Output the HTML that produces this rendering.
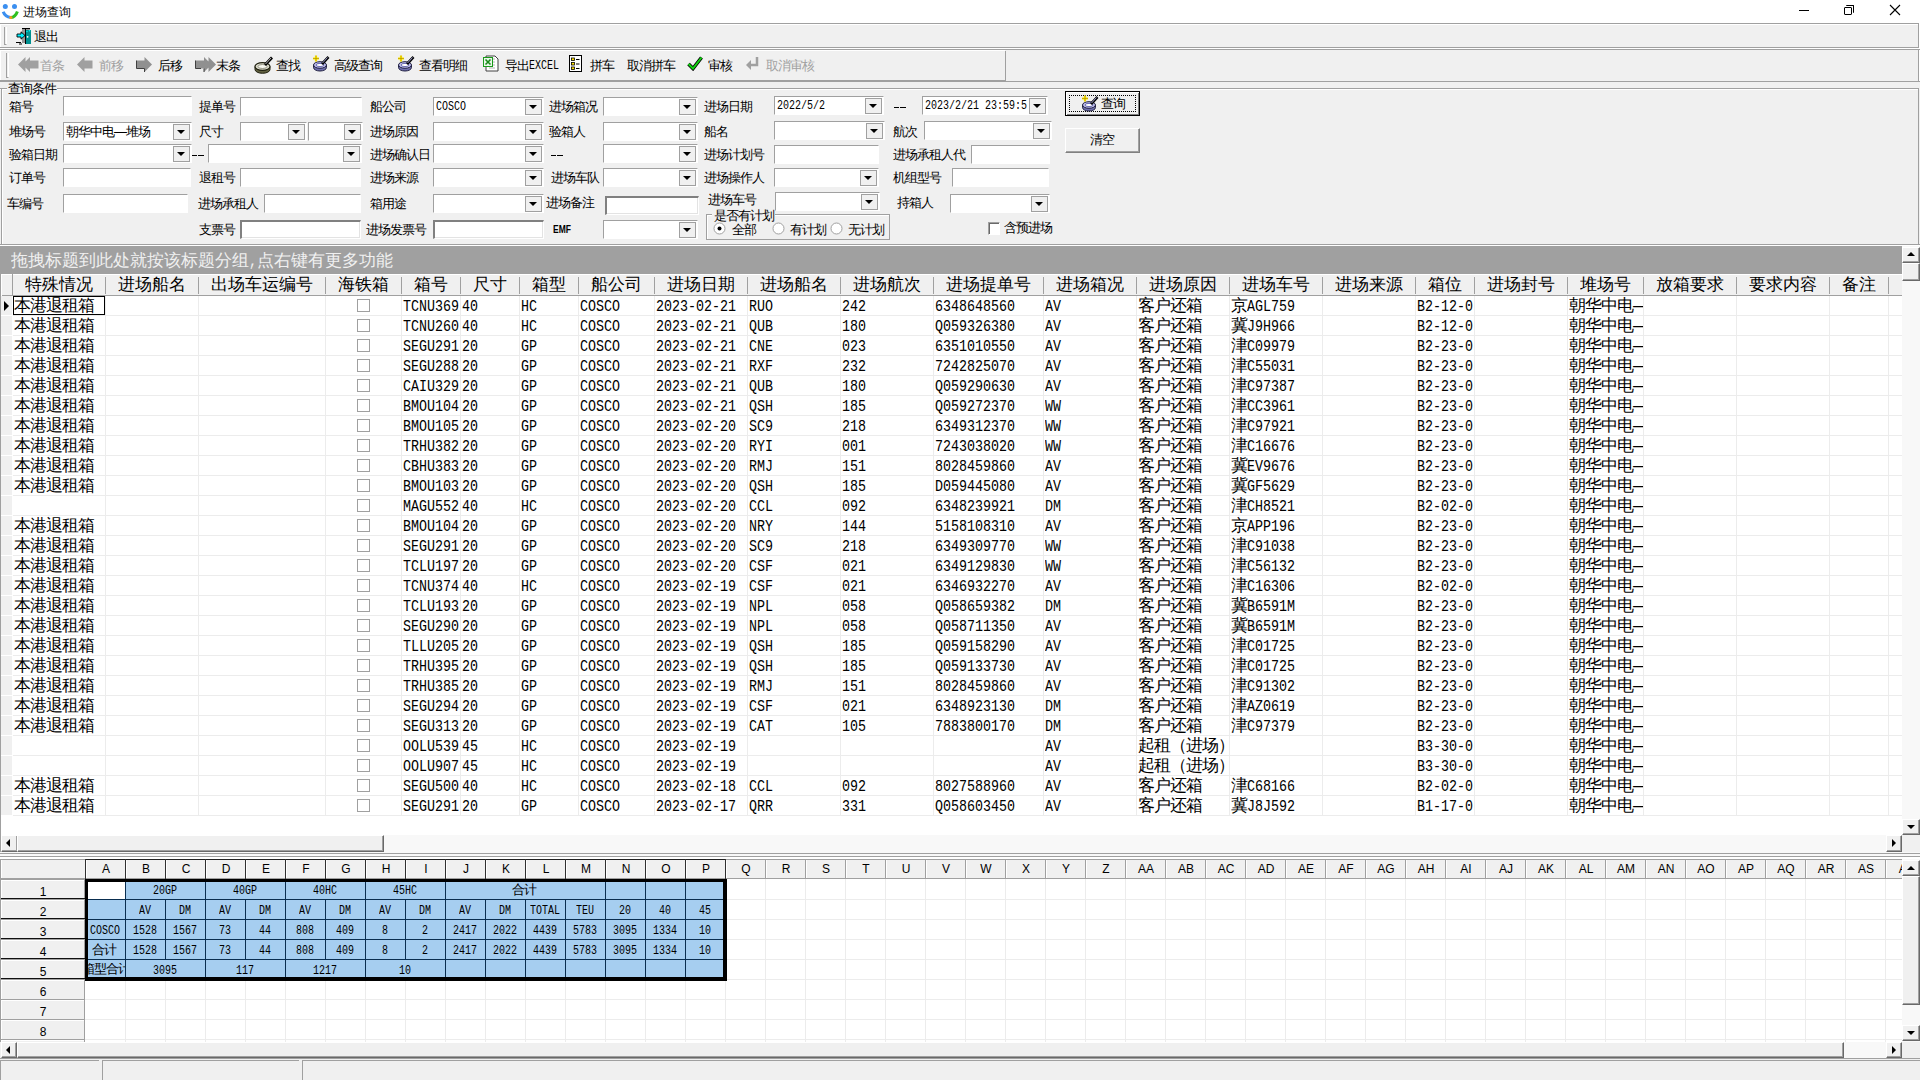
<!DOCTYPE html><html><head><meta charset="utf-8"><title>进场查询</title><style>
html,body{margin:0;padding:0;width:1920px;height:1080px;overflow:hidden;background:#f0f0f0;}
body{position:relative;font-family:"Liberation Sans",sans-serif;}
div{position:absolute;box-sizing:border-box;white-space:nowrap;}
.t12{font-size:13px;line-height:12px;letter-spacing:-1px;color:#000;}
.s12{font-size:12px;line-height:12px;color:#000;}
.c17{top:0;font-size:17px;line-height:20px;color:#000;}
.a16{top:1px;font-family:'Liberation Mono',monospace;font-size:16px;line-height:20px;transform:scaleX(0.8333);transform-origin:0 0;color:#000;}
.inp{background:#fff;border-top:1px solid #a0a0a0;border-left:1px solid #a0a0a0;border-right:1px solid #fff;border-bottom:1px solid #fff;}
.sunk{background:#fff;border-top:2px solid #808080;border-left:2px solid #808080;border-right:1px solid #fff;border-bottom:1px solid #fff;box-shadow:inset -1px -1px 0 #e3e3e3;}
.cbtn{background:#f0f0f0;border:1px solid #a0a0a0;}
.tri{width:0;height:0;border-left:4px solid transparent;border-right:4px solid transparent;border-top:4px solid #000;}
.hl{background:#a0a0a0;}
</style></head><body>
<div class="" style="left:0px;top:0px;width:1920px;height:23px;background:#fff;"></div>
<svg style="position:absolute;left:1px;top:3px" width="18" height="17" viewBox="0 0 18 17"><circle cx="4.3" cy="3.4" r="2.5" fill="#3b8ff0"/><circle cx="13.5" cy="3.4" r="2.5" fill="#3b8ff0"/><path d="M2.2 8.8 Q4 13.8 9.8 14.6" stroke="#3b8ff0" stroke-width="3" fill="none"/><path d="M9.8 14.6 Q14.5 13.8 16.4 8.4" stroke="#2fc020" stroke-width="3" fill="none"/><circle cx="9.8" cy="14.5" r="1.6" fill="#f39a1c"/></svg>
<div class="t12" style="left:23px;top:6px;font-size:12px;letter-spacing:0;">进场查询</div>
<div class="" style="left:1799px;top:10px;width:10px;height:1px;background:#000;"></div>
<div class="" style="left:1844px;top:7px;width:8px;height:8px;border:1px solid #000;border-radius:1px;"></div>
<div class="" style="left:1846px;top:5px;width:8px;height:8px;border-top:1px solid #000;border-right:1px solid #000;border-radius:1px;"></div>
<svg style="position:absolute;left:1889px;top:4px" width="12" height="12" viewBox="0 0 12 12"><path d="M1 1L11 11M11 1L1 11" stroke="#000" stroke-width="1.1"/></svg>
<div class="" style="left:0px;top:23px;width:1920px;height:1px;background:#a0a0a0;"></div>
<div class="" style="left:0px;top:24px;width:1918px;height:23px;background:#f0f0f0;border-top:1px solid #fff;border-left:1px solid #fff;"></div>
<div class="" style="left:0px;top:47px;width:1919px;height:1px;background:#a0a0a0;"></div>
<div class="" style="left:1918px;top:23px;width:1px;height:25px;background:#a0a0a0;"></div>
<div class="" style="left:1919px;top:23px;width:1px;height:59px;background:#fff;"></div>
<div class="" style="left:4px;top:27px;width:3px;height:18px;border-left:1px solid #a0a0a0;border-bottom:1px solid #a0a0a0;border-right:1px solid #fff;"></div>
<svg style="position:absolute;left:16px;top:28px" width="16" height="17" viewBox="0 0 16 17"><rect x="6" y="1" width="8" height="14" fill="#989898"/><path d="M6 0.5H14" stroke="#000"/><rect x="10" y="2" width="5" height="14" fill="#009090"/><path d="M9.5 1V16" stroke="#000"/><circle cx="11.6" cy="8.8" r="0.9" fill="#fff"/><circle cx="13.5" cy="2.8" r="0.8" fill="#0ff"/><circle cx="11" cy="3.5" r="0.7" fill="#0ff"/><path d="M9 7.5L5 3.8V6H1V9H5V11.2Z" fill="#00f0ff" stroke="#000" stroke-width="0.9"/><path d="M0 14.5H5M3 16H6" stroke="#000" stroke-width="1"/></svg>
<div class="t12" style="left:34px;top:31px;">退出</div>
<div class="" style="left:0px;top:48px;width:1920px;height:1px;background:#fff;"></div>
<div class="" style="left:0px;top:49px;width:1920px;height:1px;background:#a0a0a0;"></div>
<div class="" style="left:0px;top:50px;width:1005px;height:31px;background:#f0f0f0;border-top:1px solid #fff;border-left:1px solid #fff;"></div>
<div class="" style="left:1005px;top:51px;width:1px;height:30px;background:#a0a0a0;"></div>
<div class="" style="left:0px;top:80px;width:1005px;height:2px;background:#a0a0a0;"></div>
<div class="" style="left:1005px;top:81px;width:915px;height:1px;background:#a0a0a0;"></div>
<div class="" style="left:1918px;top:49px;width:1px;height:33px;background:#a0a0a0;"></div>
<div class="" style="left:6px;top:53px;width:3px;height:25px;border-left:1px solid #a0a0a0;border-bottom:1px solid #a0a0a0;border-right:1px solid #fff;"></div>
<svg style="position:absolute;left:18px;top:56px" width="21" height="17" viewBox="0 0 21 17"><path d="M0 8.5L7.5 1V16Z M4.5 8.5L12 1V16Z" fill="#a0a0a0"/><rect x="10" y="4.5" width="10.5" height="8" fill="#a0a0a0"/></svg>
<div class="t12" style="left:40px;top:60px;color:#a0a0a0;">首条</div>
<svg style="position:absolute;left:77px;top:56px" width="16" height="17" viewBox="0 0 16 17"><path d="M0 8.5L7.5 1V16Z" fill="#a0a0a0"/><rect x="6" y="4.5" width="9.5" height="8" fill="#a0a0a0"/></svg>
<div class="t12" style="left:99px;top:60px;color:#a0a0a0;">前移</div>
<svg style="position:absolute;left:136px;top:56px" width="16" height="17" viewBox="0 0 16 17"><path d="M16 8.5L8.5 1V16Z" fill="#909090"/><rect x="0.5" y="4.5" width="9.5" height="8" fill="#909090"/><path d="M0.5 4.5V12.5H8.5V16" stroke="#404040" fill="none"/></svg>
<div class="t12" style="left:158px;top:60px;">后移</div>
<svg style="position:absolute;left:195px;top:56px" width="22" height="17" viewBox="0 0 22 17"><path d="M21 8.5L13.5 1V16Z M16.5 8.5L9 1V16Z" fill="#909090"/><rect x="0.5" y="4.5" width="10.5" height="8" fill="#909090"/><path d="M0.5 4.5V12.5H6M9 12.5V16" stroke="#404040" fill="none"/></svg>
<div class="t12" style="left:216px;top:60px;">末条</div>
<svg style="position:absolute;left:254px;top:56px" width="19" height="18" viewBox="0 0 19 18"><path d="M1 10.5V13.5A7.5 3.8 0 0 0 16 13.5V10.5" fill="#606040" stroke="#202010"/><ellipse cx="8.5" cy="10.5" rx="7.5" ry="3.8" fill="#d8d8c8" stroke="#202010" stroke-width="1.2"/><ellipse cx="8.5" cy="10.5" rx="4.5" ry="2" fill="#f8f8f0" stroke="#808070" stroke-width="0.8"/><path d="M11 9L18 1.5" stroke="#000" stroke-width="2.8"/><path d="M11.5 8L17 2" stroke="#e0e0e0" stroke-width="0.8"/></svg>
<div class="t12" style="left:276px;top:60px;">查找</div>
<svg style="position:absolute;left:312px;top:55px" width="18" height="17" viewBox="0 0 18 17"><path d="M1.5 10 V12.5 A6.5 3.5 0 0 0 14.5 12.5 V10" fill="#7070b0" stroke="#202040"/><ellipse cx="8" cy="10" rx="6.5" ry="3.3" fill="#b8b8e8" stroke="#202040"/><ellipse cx="8" cy="10" rx="3.8" ry="1.6" fill="#fff" stroke="#5050a0" stroke-width="0.8"/><path d="M10 9L16.5 2" stroke="#000" stroke-width="2.6"/><path d="M10.5 8L15.5 2.5" stroke="#c0c0ff" stroke-width="0.8"/><path d="M4 0.5V6.5M1 3.5H7" stroke="#ffe800" stroke-width="2.2"/><path d="M4 0.5V6.5M1 3.5H7" stroke="#806000" stroke-width="0.4" fill="none"/></svg>
<div class="t12" style="left:334px;top:60px;">高级查询</div>
<svg style="position:absolute;left:397px;top:55px" width="18" height="17" viewBox="0 0 18 17"><path d="M1.5 10 V12.5 A6.5 3.5 0 0 0 14.5 12.5 V10" fill="#7070b0" stroke="#202040"/><ellipse cx="8" cy="10" rx="6.5" ry="3.3" fill="#b8b8e8" stroke="#202040"/><ellipse cx="8" cy="10" rx="3.8" ry="1.6" fill="#fff" stroke="#5050a0" stroke-width="0.8"/><path d="M10 9L16.5 2" stroke="#000" stroke-width="2.6"/><path d="M10.5 8L15.5 2.5" stroke="#c0c0ff" stroke-width="0.8"/><path d="M4 0.5V6.5M1 3.5H7" stroke="#ffe800" stroke-width="2.2"/><path d="M4 0.5V6.5M1 3.5H7" stroke="#806000" stroke-width="0.4" fill="none"/></svg>
<div class="t12" style="left:419px;top:60px;">查看明细</div>
<svg style="position:absolute;left:483px;top:55px" width="16" height="17" viewBox="0 0 16 17"><path d="M3 1H12L15 4V16H3Z" fill="#fff" stroke="#404040"/><path d="M6 4H12M6 7H12M6 10H12M6 13H12" stroke="#a0a0a0" stroke-width="0.8"/><rect x="0.5" y="2.5" width="9" height="9" fill="#e8f8e8" stroke="#1a9a1a"/><path d="M2.5 4.5L7.5 9.5M7.5 4.5L2.5 9.5" stroke="#1a8a1a" stroke-width="1.6"/></svg>
<div class="t12" style="left:505px;top:60px;">导出</div>
<div style="left:529px;top:60px;font-family:'Liberation Mono',monospace;font-size:12px;line-height:12px;color:#000;transform:scaleX(0.8333);transform-origin:0 0;">EXCEL</div>
<svg style="position:absolute;left:569px;top:55px" width="13" height="17" viewBox="0 0 13 17"><rect x="0.5" y="0.5" width="12" height="16" fill="#fff" stroke="#000"/><rect x="2.5" y="3" width="3" height="2.5" fill="#ffe000" stroke="#000" stroke-width="0.8"/><rect x="2.5" y="7.5" width="3" height="2.5" fill="#ffe000" stroke="#000" stroke-width="0.8"/><rect x="2.5" y="12" width="3" height="2.5" fill="#ffe000" stroke="#000" stroke-width="0.8"/><path d="M7 4.5H10.5M7 9H10.5M7 13.5H10.5" stroke="#000"/></svg>
<div class="t12" style="left:590px;top:60px;">拼车</div>
<div class="t12" style="left:627px;top:60px;">取消拼车</div>
<svg style="position:absolute;left:687px;top:56px" width="16" height="15" viewBox="0 0 16 15"><path d="M1.5 8L6 12.5L14.5 1.5" stroke="#000" stroke-width="3.6" fill="none"/><path d="M1.5 8L6 12.5L14.5 1.5" stroke="#10d010" stroke-width="2" fill="none"/></svg>
<div class="t12" style="left:708px;top:60px;">审核</div>
<svg style="position:absolute;left:746px;top:57px" width="13" height="13" viewBox="0 0 13 13"><path d="M11 0V8H4" stroke="#a0a0a0" stroke-width="2.5" fill="none"/><path d="M0 8L5 3V13Z" fill="#a0a0a0"/></svg>
<div class="t12" style="left:766px;top:60px;color:#a0a0a0;">取消审核</div>
<div class="" style="left:0px;top:82px;width:1920px;height:164px;background:#f0f0f0;"></div>
<div class="" style="left:0px;top:88px;width:1919px;height:1px;background:#a0a0a0;"></div>
<div class="" style="left:0px;top:89px;width:1918px;height:1px;background:#fff;"></div>
<div class="" style="left:0px;top:244px;width:1920px;height:1px;background:#a0a0a0;"></div>
<div class="" style="left:0px;top:245px;width:1920px;height:1px;background:#fff;"></div>
<div class="" style="left:1px;top:88px;width:1px;height:156px;background:#a0a0a0;"></div>
<div class="" style="left:2px;top:89px;width:1px;height:155px;background:#fff;"></div>
<div class="" style="left:1918px;top:88px;width:1px;height:156px;background:#a0a0a0;"></div>
<div class="" style="left:7px;top:82px;width:50px;height:15px;background:#f0f0f0;"></div>
<div class="t12" style="left:8px;top:83px;">查询条件</div>
<div class="t12" style="left:9px;top:101px;">箱号</div>
<div class="inp" style="left:63px;top:96px;width:129px;height:20px;"></div>
<div class="t12" style="left:9px;top:126px;">堆场号</div>
<div class="inp" style="left:63px;top:122px;width:129px;height:19px;"></div>
<div class="cbtn" style="left:173px;top:124px;width:17px;height:16px;"></div>
<div class="tri" style="left:177px;top:130px"></div>
<div class="t12" style="left:66px;top:126px;">朝华中电—堆场</div>
<div class="t12" style="left:9px;top:149px;">验箱日期</div>
<div class="inp" style="left:63px;top:144px;width:129px;height:19px;"></div>
<div class="cbtn" style="left:173px;top:146px;width:17px;height:16px;"></div>
<div class="tri" style="left:177px;top:152px"></div>
<div class="" style="left:192px;top:155px;width:5px;height:1px;background:#000;"></div>
<div class="" style="left:198px;top:155px;width:6px;height:1px;background:#000;"></div>
<div class="t12" style="left:9px;top:172px;">订单号</div>
<div class="inp" style="left:63px;top:168px;width:128px;height:19px;"></div>
<div class="t12" style="left:7px;top:198px;">车编号</div>
<div class="inp" style="left:63px;top:194px;width:125px;height:19px;"></div>
<div class="t12" style="left:199px;top:101px;">提单号</div>
<div class="inp" style="left:240px;top:97px;width:122px;height:19px;"></div>
<div class="t12" style="left:199px;top:126px;">尺寸</div>
<div class="inp" style="left:240px;top:122px;width:67px;height:19px;"></div>
<div class="cbtn" style="left:288px;top:124px;width:17px;height:16px;"></div>
<div class="tri" style="left:292px;top:130px"></div>
<div class="inp" style="left:308px;top:122px;width:55px;height:19px;"></div>
<div class="cbtn" style="left:344px;top:124px;width:17px;height:16px;"></div>
<div class="tri" style="left:348px;top:130px"></div>
<div class="inp" style="left:208px;top:144px;width:154px;height:19px;"></div>
<div class="cbtn" style="left:343px;top:146px;width:17px;height:16px;"></div>
<div class="tri" style="left:347px;top:152px"></div>
<div class="t12" style="left:199px;top:172px;">退租号</div>
<div class="inp" style="left:240px;top:168px;width:121px;height:19px;"></div>
<div class="t12" style="left:198px;top:198px;">进场承租人</div>
<div class="inp" style="left:264px;top:194px;width:97px;height:19px;"></div>
<div class="t12" style="left:199px;top:224px;">支票号</div>
<div class="sunk" style="left:240px;top:220px;width:121px;height:19px;"></div>
<div class="t12" style="left:370px;top:101px;">船公司</div>
<div class="inp" style="left:433px;top:97px;width:111px;height:19px;"></div>
<div class="cbtn" style="left:525px;top:99px;width:17px;height:16px;"></div>
<div class="tri" style="left:529px;top:105px"></div>
<div style="left:436px;top:101px;font-family:'Liberation Mono',monospace;font-size:13px;line-height:12px;color:#000;transform:scaleX(0.7692);transform-origin:0 0;">COSCO</div>
<div class="t12" style="left:370px;top:126px;">进场原因</div>
<div class="inp" style="left:433px;top:122px;width:111px;height:19px;"></div>
<div class="cbtn" style="left:525px;top:124px;width:17px;height:16px;"></div>
<div class="tri" style="left:529px;top:130px"></div>
<div class="t12" style="left:370px;top:149px;">进场确认日</div>
<div class="inp" style="left:433px;top:144px;width:111px;height:19px;"></div>
<div class="cbtn" style="left:525px;top:146px;width:17px;height:16px;"></div>
<div class="tri" style="left:529px;top:152px"></div>
<div class="t12" style="left:370px;top:172px;">进场来源</div>
<div class="inp" style="left:433px;top:168px;width:111px;height:19px;"></div>
<div class="cbtn" style="left:525px;top:170px;width:17px;height:16px;"></div>
<div class="tri" style="left:529px;top:176px"></div>
<div class="t12" style="left:370px;top:198px;">箱用途</div>
<div class="inp" style="left:433px;top:194px;width:111px;height:19px;"></div>
<div class="cbtn" style="left:525px;top:196px;width:17px;height:16px;"></div>
<div class="tri" style="left:529px;top:202px"></div>
<div class="t12" style="left:366px;top:224px;">进场发票号</div>
<div class="sunk" style="left:433px;top:220px;width:111px;height:19px;"></div>
<div class="t12" style="left:553px;top:224px;font-size:10px;letter-spacing:0;font-weight:bold;transform:scaleX(0.85);transform-origin:left;">EMF</div>
<div class="t12" style="left:549px;top:101px;">进场箱况</div>
<div class="inp" style="left:603px;top:97px;width:95px;height:19px;"></div>
<div class="cbtn" style="left:679px;top:99px;width:17px;height:16px;"></div>
<div class="tri" style="left:683px;top:105px"></div>
<div class="t12" style="left:549px;top:126px;">验箱人</div>
<div class="inp" style="left:603px;top:122px;width:95px;height:19px;"></div>
<div class="cbtn" style="left:679px;top:124px;width:17px;height:16px;"></div>
<div class="tri" style="left:683px;top:130px"></div>
<div class="" style="left:551px;top:155px;width:5px;height:1px;background:#000;"></div>
<div class="" style="left:557px;top:155px;width:6px;height:1px;background:#000;"></div>
<div class="inp" style="left:603px;top:144px;width:95px;height:19px;"></div>
<div class="cbtn" style="left:679px;top:146px;width:17px;height:16px;"></div>
<div class="tri" style="left:683px;top:152px"></div>
<div class="t12" style="left:551px;top:172px;">进场车队</div>
<div class="inp" style="left:603px;top:168px;width:95px;height:19px;"></div>
<div class="cbtn" style="left:679px;top:170px;width:17px;height:16px;"></div>
<div class="tri" style="left:683px;top:176px"></div>
<div class="t12" style="left:546px;top:197px;">进场备注</div>
<div class="sunk" style="left:605px;top:196px;width:94px;height:19px;"></div>
<div class="inp" style="left:603px;top:220px;width:95px;height:19px;"></div>
<div class="cbtn" style="left:679px;top:222px;width:17px;height:16px;"></div>
<div class="tri" style="left:683px;top:228px"></div>
<div class="t12" style="left:704px;top:101px;">进场日期</div>
<div class="inp" style="left:774px;top:96px;width:110px;height:19px;"></div>
<div class="cbtn" style="left:865px;top:98px;width:17px;height:16px;"></div>
<div class="tri" style="left:869px;top:104px"></div>
<div style="left:777px;top:100px;font-family:'Liberation Mono',monospace;font-size:13px;line-height:12px;color:#000;transform:scaleX(0.7692);transform-origin:0 0;">2022/5/2</div>
<div class="t12" style="left:704px;top:126px;">船名</div>
<div class="inp" style="left:774px;top:121px;width:111px;height:19px;"></div>
<div class="cbtn" style="left:866px;top:123px;width:17px;height:16px;"></div>
<div class="tri" style="left:870px;top:129px"></div>
<div class="t12" style="left:704px;top:149px;">进场计划号</div>
<div class="inp" style="left:774px;top:145px;width:105px;height:19px;"></div>
<div class="t12" style="left:704px;top:172px;">进场操作人</div>
<div class="inp" style="left:774px;top:168px;width:105px;height:19px;"></div>
<div class="cbtn" style="left:860px;top:170px;width:17px;height:16px;"></div>
<div class="tri" style="left:864px;top:176px"></div>
<div class="t12" style="left:708px;top:194px;">进场车号</div>
<div class="inp" style="left:775px;top:192px;width:105px;height:19px;"></div>
<div class="cbtn" style="left:861px;top:194px;width:17px;height:16px;"></div>
<div class="tri" style="left:865px;top:200px"></div>
<div class="" style="left:706px;top:214px;width:184px;height:26px;border:1px solid #a0a0a0;box-shadow:1px 1px 0 #fff inset;"></div>
<div class="" style="left:712px;top:208px;width:63px;height:12px;background:#f0f0f0;"></div>
<div class="t12" style="left:714px;top:210px;">是否有计划</div>
<svg style="position:absolute;left:713px;top:222px" width="13" height="13" viewBox="0 0 13 13"><circle cx="6.5" cy="6.5" r="5.5" fill="#fff" stroke="#a0a0a0"/><circle cx="6.5" cy="6.5" r="2" fill="#000"/></svg>
<div class="t12" style="left:732px;top:224px;">全部</div>
<svg style="position:absolute;left:772px;top:222px" width="13" height="13" viewBox="0 0 13 13"><circle cx="6.5" cy="6.5" r="5.5" fill="#fff" stroke="#a0a0a0"/></svg>
<div class="t12" style="left:790px;top:224px;">有计划</div>
<svg style="position:absolute;left:830px;top:222px" width="13" height="13" viewBox="0 0 13 13"><circle cx="6.5" cy="6.5" r="5.5" fill="#fff" stroke="#a0a0a0"/></svg>
<div class="t12" style="left:848px;top:224px;">无计划</div>
<div class="" style="left:894px;top:107px;width:5px;height:1px;background:#000;"></div>
<div class="" style="left:900px;top:107px;width:6px;height:1px;background:#000;"></div>
<div class="inp" style="left:922px;top:96px;width:126px;height:19px;"></div>
<div class="cbtn" style="left:1029px;top:98px;width:17px;height:16px;"></div>
<div class="tri" style="left:1033px;top:104px"></div>
<div style="left:925px;top:100px;font-family:'Liberation Mono',monospace;font-size:13px;line-height:12px;color:#000;transform:scaleX(0.7692);transform-origin:0 0;">2023/2/21 23:59:5</div>
<div class="t12" style="left:893px;top:126px;">航次</div>
<div class="inp" style="left:924px;top:121px;width:128px;height:19px;"></div>
<div class="cbtn" style="left:1033px;top:123px;width:17px;height:16px;"></div>
<div class="tri" style="left:1037px;top:129px"></div>
<div class="t12" style="left:893px;top:149px;">进场承租人代</div>
<div class="inp" style="left:971px;top:145px;width:79px;height:19px;"></div>
<div class="t12" style="left:893px;top:172px;">机组型号</div>
<div class="inp" style="left:952px;top:168px;width:97px;height:19px;"></div>
<div class="t12" style="left:897px;top:197px;">持箱人</div>
<div class="inp" style="left:950px;top:194px;width:100px;height:19px;"></div>
<div class="cbtn" style="left:1031px;top:196px;width:17px;height:16px;"></div>
<div class="tri" style="left:1035px;top:202px"></div>
<div class="" style="left:988px;top:222px;width:12px;height:13px;background:#fff;border-top:1px solid #a0a0a0;border-left:1px solid #a0a0a0;border-right:1px solid #fff;border-bottom:1px solid #fff;box-shadow:inset 1px 1px 0 #696969;"></div>
<div class="t12" style="left:1004px;top:222px;">含预进场</div>
<div class="" style="left:1065px;top:91px;width:75px;height:25px;background:#f0f0f0;border:1px solid #000;box-shadow:inset 1px 1px 0 #fff, inset -1px -1px 0 #808080;"></div>
<div class="" style="left:1069px;top:95px;width:67px;height:17px;border:1px dotted #000;"></div>
<svg style="position:absolute;left:1081px;top:95px" width="18" height="17" viewBox="0 0 18 17"><path d="M1.5 10 V12.5 A6.5 3.5 0 0 0 14.5 12.5 V10" fill="#7070b0" stroke="#202040"/><ellipse cx="8" cy="10" rx="6.5" ry="3.3" fill="#b8b8e8" stroke="#202040"/><ellipse cx="8" cy="10" rx="3.8" ry="1.6" fill="#fff" stroke="#5050a0" stroke-width="0.8"/><path d="M10 9L16.5 2" stroke="#000" stroke-width="2.6"/><path d="M10.5 8L15.5 2.5" stroke="#c0c0ff" stroke-width="0.8"/><path d="M4 0.5V6.5M1 3.5H7" stroke="#ffe800" stroke-width="2.2"/><path d="M4 0.5V6.5M1 3.5H7" stroke="#806000" stroke-width="0.4" fill="none"/></svg>
<div class="t12" style="left:1101px;top:98px;">查询</div>
<div class="" style="left:1065px;top:128px;width:75px;height:25px;background:#f0f0f0;border-top:1px solid #fff;border-left:1px solid #fff;border-right:1px solid #808080;border-bottom:1px solid #808080;box-shadow:inset -1px -1px 0 #a0a0a0;"></div>
<div class="t12" style="left:1090px;top:134px;">清空</div>
<div class="" style="left:0px;top:246px;width:1902px;height:589px;background:#fff;"></div>
<div class="" style="left:0px;top:246px;width:1px;height:606px;background:#a0a0a0;"></div>
<div class="" style="left:1px;top:246px;width:1901px;height:28px;background:#a0a0a0;"></div>
<div style="left:11px;top:251px;width:384px;height:20px;overflow:hidden;"><div class="c17" style="left:0px;letter-spacing:0px;color:#f0f0f0;">拖拽标题到此处就按该标题分组</div><div class="a16" style="left:238px;color:#f0f0f0;">,</div><div class="c17" style="left:246px;letter-spacing:0px;color:#f0f0f0;">点右键有更多功能</div></div>
<div class="" style="left:1px;top:274px;width:1901px;height:22px;background:#f0f0f0;border-top:1px solid #fff;border-bottom:1px solid #a0a0a0;"></div>
<div class="" style="left:1px;top:274px;width:11px;height:22px;border-left:1px solid #fff;"></div>
<div class="" style="left:12px;top:274px;width:1px;height:22px;background:#a0a0a0;"></div>
<div class="" style="left:105px;top:277px;width:1px;height:17px;background:#a0a0a0;"></div>
<div style="left:25px;top:275px;width:70px;height:20px;overflow:hidden;"><div class="c17" style="left:0px;letter-spacing:0px;">特殊情况</div></div>
<div class="" style="left:198px;top:277px;width:1px;height:17px;background:#a0a0a0;"></div>
<div style="left:118px;top:275px;width:70px;height:20px;overflow:hidden;"><div class="c17" style="left:0px;letter-spacing:0px;">进场船名</div></div>
<div class="" style="left:325px;top:277px;width:1px;height:17px;background:#a0a0a0;"></div>
<div style="left:211px;top:275px;width:104px;height:20px;overflow:hidden;"><div class="c17" style="left:0px;letter-spacing:0px;">出场车运编号</div></div>
<div class="" style="left:401px;top:277px;width:1px;height:17px;background:#a0a0a0;"></div>
<div style="left:338px;top:275px;width:53px;height:20px;overflow:hidden;"><div class="c17" style="left:0px;letter-spacing:0px;">海铁箱</div></div>
<div class="" style="left:460px;top:277px;width:1px;height:17px;background:#a0a0a0;"></div>
<div style="left:414px;top:275px;width:36px;height:20px;overflow:hidden;"><div class="c17" style="left:0px;letter-spacing:0px;">箱号</div></div>
<div class="" style="left:519px;top:277px;width:1px;height:17px;background:#a0a0a0;"></div>
<div style="left:473px;top:275px;width:36px;height:20px;overflow:hidden;"><div class="c17" style="left:0px;letter-spacing:0px;">尺寸</div></div>
<div class="" style="left:578px;top:277px;width:1px;height:17px;background:#a0a0a0;"></div>
<div style="left:532px;top:275px;width:36px;height:20px;overflow:hidden;"><div class="c17" style="left:0px;letter-spacing:0px;">箱型</div></div>
<div class="" style="left:654px;top:277px;width:1px;height:17px;background:#a0a0a0;"></div>
<div style="left:591px;top:275px;width:53px;height:20px;overflow:hidden;"><div class="c17" style="left:0px;letter-spacing:0px;">船公司</div></div>
<div class="" style="left:747px;top:277px;width:1px;height:17px;background:#a0a0a0;"></div>
<div style="left:667px;top:275px;width:70px;height:20px;overflow:hidden;"><div class="c17" style="left:0px;letter-spacing:0px;">进场日期</div></div>
<div class="" style="left:840px;top:277px;width:1px;height:17px;background:#a0a0a0;"></div>
<div style="left:760px;top:275px;width:70px;height:20px;overflow:hidden;"><div class="c17" style="left:0px;letter-spacing:0px;">进场船名</div></div>
<div class="" style="left:933px;top:277px;width:1px;height:17px;background:#a0a0a0;"></div>
<div style="left:853px;top:275px;width:70px;height:20px;overflow:hidden;"><div class="c17" style="left:0px;letter-spacing:0px;">进场航次</div></div>
<div class="" style="left:1043px;top:277px;width:1px;height:17px;background:#a0a0a0;"></div>
<div style="left:946px;top:275px;width:87px;height:20px;overflow:hidden;"><div class="c17" style="left:0px;letter-spacing:0px;">进场提单号</div></div>
<div class="" style="left:1136px;top:277px;width:1px;height:17px;background:#a0a0a0;"></div>
<div style="left:1056px;top:275px;width:70px;height:20px;overflow:hidden;"><div class="c17" style="left:0px;letter-spacing:0px;">进场箱况</div></div>
<div class="" style="left:1229px;top:277px;width:1px;height:17px;background:#a0a0a0;"></div>
<div style="left:1149px;top:275px;width:70px;height:20px;overflow:hidden;"><div class="c17" style="left:0px;letter-spacing:0px;">进场原因</div></div>
<div class="" style="left:1322px;top:277px;width:1px;height:17px;background:#a0a0a0;"></div>
<div style="left:1242px;top:275px;width:70px;height:20px;overflow:hidden;"><div class="c17" style="left:0px;letter-spacing:0px;">进场车号</div></div>
<div class="" style="left:1415px;top:277px;width:1px;height:17px;background:#a0a0a0;"></div>
<div style="left:1335px;top:275px;width:70px;height:20px;overflow:hidden;"><div class="c17" style="left:0px;letter-spacing:0px;">进场来源</div></div>
<div class="" style="left:1474px;top:277px;width:1px;height:17px;background:#a0a0a0;"></div>
<div style="left:1428px;top:275px;width:36px;height:20px;overflow:hidden;"><div class="c17" style="left:0px;letter-spacing:0px;">箱位</div></div>
<div class="" style="left:1567px;top:277px;width:1px;height:17px;background:#a0a0a0;"></div>
<div style="left:1487px;top:275px;width:70px;height:20px;overflow:hidden;"><div class="c17" style="left:0px;letter-spacing:0px;">进场封号</div></div>
<div class="" style="left:1643px;top:277px;width:1px;height:17px;background:#a0a0a0;"></div>
<div style="left:1580px;top:275px;width:53px;height:20px;overflow:hidden;"><div class="c17" style="left:0px;letter-spacing:0px;">堆场号</div></div>
<div class="" style="left:1736px;top:277px;width:1px;height:17px;background:#a0a0a0;"></div>
<div style="left:1656px;top:275px;width:70px;height:20px;overflow:hidden;"><div class="c17" style="left:0px;letter-spacing:0px;">放箱要求</div></div>
<div class="" style="left:1829px;top:277px;width:1px;height:17px;background:#a0a0a0;"></div>
<div style="left:1749px;top:275px;width:70px;height:20px;overflow:hidden;"><div class="c17" style="left:0px;letter-spacing:0px;">要求内容</div></div>
<div class="" style="left:1888px;top:277px;width:1px;height:17px;background:#a0a0a0;"></div>
<div style="left:1842px;top:275px;width:36px;height:20px;overflow:hidden;"><div class="c17" style="left:0px;letter-spacing:0px;">备注</div></div>
<div class="" style="left:105px;top:296px;width:1px;height:520px;background:#ececec;"></div>
<div class="" style="left:198px;top:296px;width:1px;height:520px;background:#ececec;"></div>
<div class="" style="left:325px;top:296px;width:1px;height:520px;background:#ececec;"></div>
<div class="" style="left:401px;top:296px;width:1px;height:520px;background:#ececec;"></div>
<div class="" style="left:460px;top:296px;width:1px;height:520px;background:#ececec;"></div>
<div class="" style="left:519px;top:296px;width:1px;height:520px;background:#ececec;"></div>
<div class="" style="left:578px;top:296px;width:1px;height:520px;background:#ececec;"></div>
<div class="" style="left:654px;top:296px;width:1px;height:520px;background:#ececec;"></div>
<div class="" style="left:747px;top:296px;width:1px;height:520px;background:#ececec;"></div>
<div class="" style="left:840px;top:296px;width:1px;height:520px;background:#ececec;"></div>
<div class="" style="left:933px;top:296px;width:1px;height:520px;background:#ececec;"></div>
<div class="" style="left:1043px;top:296px;width:1px;height:520px;background:#ececec;"></div>
<div class="" style="left:1136px;top:296px;width:1px;height:520px;background:#ececec;"></div>
<div class="" style="left:1229px;top:296px;width:1px;height:520px;background:#ececec;"></div>
<div class="" style="left:1322px;top:296px;width:1px;height:520px;background:#ececec;"></div>
<div class="" style="left:1415px;top:296px;width:1px;height:520px;background:#ececec;"></div>
<div class="" style="left:1474px;top:296px;width:1px;height:520px;background:#ececec;"></div>
<div class="" style="left:1567px;top:296px;width:1px;height:520px;background:#ececec;"></div>
<div class="" style="left:1643px;top:296px;width:1px;height:520px;background:#ececec;"></div>
<div class="" style="left:1736px;top:296px;width:1px;height:520px;background:#ececec;"></div>
<div class="" style="left:1829px;top:296px;width:1px;height:520px;background:#ececec;"></div>
<div class="" style="left:1888px;top:296px;width:1px;height:520px;background:#ececec;"></div>
<div class="" style="left:1px;top:296px;width:11px;height:520px;background:#f0f0f0;"></div>
<div class="" style="left:12px;top:296px;width:1px;height:520px;background:#fff;"></div>
<div class="" style="left:13px;top:315px;width:1889px;height:1px;background:#ececec;"></div>
<div class="" style="left:1px;top:315px;width:11px;height:1px;background:#fff;"></div>
<div style="left:14px;top:296px;width:91px;height:20px;overflow:hidden;"><div class="c17" style="left:0px;letter-spacing:-1px;">本港退租箱</div></div>
<div style="left:403px;top:296px;width:57px;height:20px;overflow:hidden;"><div class="a16" style="left:0px;">TCNU369</div></div>
<div style="left:462px;top:296px;width:57px;height:20px;overflow:hidden;"><div class="a16" style="left:0px;">40</div></div>
<div style="left:521px;top:296px;width:57px;height:20px;overflow:hidden;"><div class="a16" style="left:0px;">HC</div></div>
<div style="left:580px;top:296px;width:74px;height:20px;overflow:hidden;"><div class="a16" style="left:0px;">COSCO</div></div>
<div style="left:656px;top:296px;width:91px;height:20px;overflow:hidden;"><div class="a16" style="left:0px;">2023-02-21</div></div>
<div style="left:749px;top:296px;width:91px;height:20px;overflow:hidden;"><div class="a16" style="left:0px;">RUO</div></div>
<div style="left:842px;top:296px;width:91px;height:20px;overflow:hidden;"><div class="a16" style="left:0px;">242</div></div>
<div style="left:935px;top:296px;width:108px;height:20px;overflow:hidden;"><div class="a16" style="left:0px;">6348648560</div></div>
<div style="left:1045px;top:296px;width:91px;height:20px;overflow:hidden;"><div class="a16" style="left:0px;">AV</div></div>
<div style="left:1138px;top:296px;width:91px;height:20px;overflow:hidden;"><div class="c17" style="left:0px;letter-spacing:-1px;">客户还箱</div></div>
<div style="left:1231px;top:296px;width:91px;height:20px;overflow:hidden;"><div class="c17" style="left:0px;letter-spacing:-1px;">京</div><div class="a16" style="left:16px;">AGL759</div></div>
<div style="left:1417px;top:296px;width:57px;height:20px;overflow:hidden;"><div class="a16" style="left:0px;">B2-12-0</div></div>
<div style="left:1569px;top:296px;width:74px;height:20px;overflow:hidden;"><div class="c17" style="left:0px;letter-spacing:-1px;">朝华中电—堆场</div></div>
<div class="" style="left:357px;top:299px;width:13px;height:13px;background:#fff;border:1px solid #a0a0a0;"></div>
<div class="" style="left:13px;top:335px;width:1889px;height:1px;background:#ececec;"></div>
<div class="" style="left:1px;top:335px;width:11px;height:1px;background:#fff;"></div>
<div style="left:14px;top:316px;width:91px;height:20px;overflow:hidden;"><div class="c17" style="left:0px;letter-spacing:-1px;">本港退租箱</div></div>
<div style="left:403px;top:316px;width:57px;height:20px;overflow:hidden;"><div class="a16" style="left:0px;">TCNU260</div></div>
<div style="left:462px;top:316px;width:57px;height:20px;overflow:hidden;"><div class="a16" style="left:0px;">40</div></div>
<div style="left:521px;top:316px;width:57px;height:20px;overflow:hidden;"><div class="a16" style="left:0px;">HC</div></div>
<div style="left:580px;top:316px;width:74px;height:20px;overflow:hidden;"><div class="a16" style="left:0px;">COSCO</div></div>
<div style="left:656px;top:316px;width:91px;height:20px;overflow:hidden;"><div class="a16" style="left:0px;">2023-02-21</div></div>
<div style="left:749px;top:316px;width:91px;height:20px;overflow:hidden;"><div class="a16" style="left:0px;">QUB</div></div>
<div style="left:842px;top:316px;width:91px;height:20px;overflow:hidden;"><div class="a16" style="left:0px;">180</div></div>
<div style="left:935px;top:316px;width:108px;height:20px;overflow:hidden;"><div class="a16" style="left:0px;">Q059326380</div></div>
<div style="left:1045px;top:316px;width:91px;height:20px;overflow:hidden;"><div class="a16" style="left:0px;">AV</div></div>
<div style="left:1138px;top:316px;width:91px;height:20px;overflow:hidden;"><div class="c17" style="left:0px;letter-spacing:-1px;">客户还箱</div></div>
<div style="left:1231px;top:316px;width:91px;height:20px;overflow:hidden;"><div class="c17" style="left:0px;letter-spacing:-1px;">冀</div><div class="a16" style="left:16px;">J9H966</div></div>
<div style="left:1417px;top:316px;width:57px;height:20px;overflow:hidden;"><div class="a16" style="left:0px;">B2-12-0</div></div>
<div style="left:1569px;top:316px;width:74px;height:20px;overflow:hidden;"><div class="c17" style="left:0px;letter-spacing:-1px;">朝华中电—堆场</div></div>
<div class="" style="left:357px;top:319px;width:13px;height:13px;background:#fff;border:1px solid #a0a0a0;"></div>
<div class="" style="left:13px;top:355px;width:1889px;height:1px;background:#ececec;"></div>
<div class="" style="left:1px;top:355px;width:11px;height:1px;background:#fff;"></div>
<div style="left:14px;top:336px;width:91px;height:20px;overflow:hidden;"><div class="c17" style="left:0px;letter-spacing:-1px;">本港退租箱</div></div>
<div style="left:403px;top:336px;width:57px;height:20px;overflow:hidden;"><div class="a16" style="left:0px;">SEGU291</div></div>
<div style="left:462px;top:336px;width:57px;height:20px;overflow:hidden;"><div class="a16" style="left:0px;">20</div></div>
<div style="left:521px;top:336px;width:57px;height:20px;overflow:hidden;"><div class="a16" style="left:0px;">GP</div></div>
<div style="left:580px;top:336px;width:74px;height:20px;overflow:hidden;"><div class="a16" style="left:0px;">COSCO</div></div>
<div style="left:656px;top:336px;width:91px;height:20px;overflow:hidden;"><div class="a16" style="left:0px;">2023-02-21</div></div>
<div style="left:749px;top:336px;width:91px;height:20px;overflow:hidden;"><div class="a16" style="left:0px;">CNE</div></div>
<div style="left:842px;top:336px;width:91px;height:20px;overflow:hidden;"><div class="a16" style="left:0px;">023</div></div>
<div style="left:935px;top:336px;width:108px;height:20px;overflow:hidden;"><div class="a16" style="left:0px;">6351010550</div></div>
<div style="left:1045px;top:336px;width:91px;height:20px;overflow:hidden;"><div class="a16" style="left:0px;">AV</div></div>
<div style="left:1138px;top:336px;width:91px;height:20px;overflow:hidden;"><div class="c17" style="left:0px;letter-spacing:-1px;">客户还箱</div></div>
<div style="left:1231px;top:336px;width:91px;height:20px;overflow:hidden;"><div class="c17" style="left:0px;letter-spacing:-1px;">津</div><div class="a16" style="left:16px;">C09979</div></div>
<div style="left:1417px;top:336px;width:57px;height:20px;overflow:hidden;"><div class="a16" style="left:0px;">B2-23-0</div></div>
<div style="left:1569px;top:336px;width:74px;height:20px;overflow:hidden;"><div class="c17" style="left:0px;letter-spacing:-1px;">朝华中电—堆场</div></div>
<div class="" style="left:357px;top:339px;width:13px;height:13px;background:#fff;border:1px solid #a0a0a0;"></div>
<div class="" style="left:13px;top:375px;width:1889px;height:1px;background:#ececec;"></div>
<div class="" style="left:1px;top:375px;width:11px;height:1px;background:#fff;"></div>
<div style="left:14px;top:356px;width:91px;height:20px;overflow:hidden;"><div class="c17" style="left:0px;letter-spacing:-1px;">本港退租箱</div></div>
<div style="left:403px;top:356px;width:57px;height:20px;overflow:hidden;"><div class="a16" style="left:0px;">SEGU288</div></div>
<div style="left:462px;top:356px;width:57px;height:20px;overflow:hidden;"><div class="a16" style="left:0px;">20</div></div>
<div style="left:521px;top:356px;width:57px;height:20px;overflow:hidden;"><div class="a16" style="left:0px;">GP</div></div>
<div style="left:580px;top:356px;width:74px;height:20px;overflow:hidden;"><div class="a16" style="left:0px;">COSCO</div></div>
<div style="left:656px;top:356px;width:91px;height:20px;overflow:hidden;"><div class="a16" style="left:0px;">2023-02-21</div></div>
<div style="left:749px;top:356px;width:91px;height:20px;overflow:hidden;"><div class="a16" style="left:0px;">RXF</div></div>
<div style="left:842px;top:356px;width:91px;height:20px;overflow:hidden;"><div class="a16" style="left:0px;">232</div></div>
<div style="left:935px;top:356px;width:108px;height:20px;overflow:hidden;"><div class="a16" style="left:0px;">7242825070</div></div>
<div style="left:1045px;top:356px;width:91px;height:20px;overflow:hidden;"><div class="a16" style="left:0px;">AV</div></div>
<div style="left:1138px;top:356px;width:91px;height:20px;overflow:hidden;"><div class="c17" style="left:0px;letter-spacing:-1px;">客户还箱</div></div>
<div style="left:1231px;top:356px;width:91px;height:20px;overflow:hidden;"><div class="c17" style="left:0px;letter-spacing:-1px;">津</div><div class="a16" style="left:16px;">C55031</div></div>
<div style="left:1417px;top:356px;width:57px;height:20px;overflow:hidden;"><div class="a16" style="left:0px;">B2-23-0</div></div>
<div style="left:1569px;top:356px;width:74px;height:20px;overflow:hidden;"><div class="c17" style="left:0px;letter-spacing:-1px;">朝华中电—堆场</div></div>
<div class="" style="left:357px;top:359px;width:13px;height:13px;background:#fff;border:1px solid #a0a0a0;"></div>
<div class="" style="left:13px;top:395px;width:1889px;height:1px;background:#ececec;"></div>
<div class="" style="left:1px;top:395px;width:11px;height:1px;background:#fff;"></div>
<div style="left:14px;top:376px;width:91px;height:20px;overflow:hidden;"><div class="c17" style="left:0px;letter-spacing:-1px;">本港退租箱</div></div>
<div style="left:403px;top:376px;width:57px;height:20px;overflow:hidden;"><div class="a16" style="left:0px;">CAIU329</div></div>
<div style="left:462px;top:376px;width:57px;height:20px;overflow:hidden;"><div class="a16" style="left:0px;">20</div></div>
<div style="left:521px;top:376px;width:57px;height:20px;overflow:hidden;"><div class="a16" style="left:0px;">GP</div></div>
<div style="left:580px;top:376px;width:74px;height:20px;overflow:hidden;"><div class="a16" style="left:0px;">COSCO</div></div>
<div style="left:656px;top:376px;width:91px;height:20px;overflow:hidden;"><div class="a16" style="left:0px;">2023-02-21</div></div>
<div style="left:749px;top:376px;width:91px;height:20px;overflow:hidden;"><div class="a16" style="left:0px;">QUB</div></div>
<div style="left:842px;top:376px;width:91px;height:20px;overflow:hidden;"><div class="a16" style="left:0px;">180</div></div>
<div style="left:935px;top:376px;width:108px;height:20px;overflow:hidden;"><div class="a16" style="left:0px;">Q059290630</div></div>
<div style="left:1045px;top:376px;width:91px;height:20px;overflow:hidden;"><div class="a16" style="left:0px;">AV</div></div>
<div style="left:1138px;top:376px;width:91px;height:20px;overflow:hidden;"><div class="c17" style="left:0px;letter-spacing:-1px;">客户还箱</div></div>
<div style="left:1231px;top:376px;width:91px;height:20px;overflow:hidden;"><div class="c17" style="left:0px;letter-spacing:-1px;">津</div><div class="a16" style="left:16px;">C97387</div></div>
<div style="left:1417px;top:376px;width:57px;height:20px;overflow:hidden;"><div class="a16" style="left:0px;">B2-23-0</div></div>
<div style="left:1569px;top:376px;width:74px;height:20px;overflow:hidden;"><div class="c17" style="left:0px;letter-spacing:-1px;">朝华中电—堆场</div></div>
<div class="" style="left:357px;top:379px;width:13px;height:13px;background:#fff;border:1px solid #a0a0a0;"></div>
<div class="" style="left:13px;top:415px;width:1889px;height:1px;background:#ececec;"></div>
<div class="" style="left:1px;top:415px;width:11px;height:1px;background:#fff;"></div>
<div style="left:14px;top:396px;width:91px;height:20px;overflow:hidden;"><div class="c17" style="left:0px;letter-spacing:-1px;">本港退租箱</div></div>
<div style="left:403px;top:396px;width:57px;height:20px;overflow:hidden;"><div class="a16" style="left:0px;">BMOU104</div></div>
<div style="left:462px;top:396px;width:57px;height:20px;overflow:hidden;"><div class="a16" style="left:0px;">20</div></div>
<div style="left:521px;top:396px;width:57px;height:20px;overflow:hidden;"><div class="a16" style="left:0px;">GP</div></div>
<div style="left:580px;top:396px;width:74px;height:20px;overflow:hidden;"><div class="a16" style="left:0px;">COSCO</div></div>
<div style="left:656px;top:396px;width:91px;height:20px;overflow:hidden;"><div class="a16" style="left:0px;">2023-02-21</div></div>
<div style="left:749px;top:396px;width:91px;height:20px;overflow:hidden;"><div class="a16" style="left:0px;">QSH</div></div>
<div style="left:842px;top:396px;width:91px;height:20px;overflow:hidden;"><div class="a16" style="left:0px;">185</div></div>
<div style="left:935px;top:396px;width:108px;height:20px;overflow:hidden;"><div class="a16" style="left:0px;">Q059272370</div></div>
<div style="left:1045px;top:396px;width:91px;height:20px;overflow:hidden;"><div class="a16" style="left:0px;">WW</div></div>
<div style="left:1138px;top:396px;width:91px;height:20px;overflow:hidden;"><div class="c17" style="left:0px;letter-spacing:-1px;">客户还箱</div></div>
<div style="left:1231px;top:396px;width:91px;height:20px;overflow:hidden;"><div class="c17" style="left:0px;letter-spacing:-1px;">津</div><div class="a16" style="left:16px;">CC3961</div></div>
<div style="left:1417px;top:396px;width:57px;height:20px;overflow:hidden;"><div class="a16" style="left:0px;">B2-23-0</div></div>
<div style="left:1569px;top:396px;width:74px;height:20px;overflow:hidden;"><div class="c17" style="left:0px;letter-spacing:-1px;">朝华中电—堆场</div></div>
<div class="" style="left:357px;top:399px;width:13px;height:13px;background:#fff;border:1px solid #a0a0a0;"></div>
<div class="" style="left:13px;top:435px;width:1889px;height:1px;background:#ececec;"></div>
<div class="" style="left:1px;top:435px;width:11px;height:1px;background:#fff;"></div>
<div style="left:14px;top:416px;width:91px;height:20px;overflow:hidden;"><div class="c17" style="left:0px;letter-spacing:-1px;">本港退租箱</div></div>
<div style="left:403px;top:416px;width:57px;height:20px;overflow:hidden;"><div class="a16" style="left:0px;">BMOU105</div></div>
<div style="left:462px;top:416px;width:57px;height:20px;overflow:hidden;"><div class="a16" style="left:0px;">20</div></div>
<div style="left:521px;top:416px;width:57px;height:20px;overflow:hidden;"><div class="a16" style="left:0px;">GP</div></div>
<div style="left:580px;top:416px;width:74px;height:20px;overflow:hidden;"><div class="a16" style="left:0px;">COSCO</div></div>
<div style="left:656px;top:416px;width:91px;height:20px;overflow:hidden;"><div class="a16" style="left:0px;">2023-02-20</div></div>
<div style="left:749px;top:416px;width:91px;height:20px;overflow:hidden;"><div class="a16" style="left:0px;">SC9</div></div>
<div style="left:842px;top:416px;width:91px;height:20px;overflow:hidden;"><div class="a16" style="left:0px;">218</div></div>
<div style="left:935px;top:416px;width:108px;height:20px;overflow:hidden;"><div class="a16" style="left:0px;">6349312370</div></div>
<div style="left:1045px;top:416px;width:91px;height:20px;overflow:hidden;"><div class="a16" style="left:0px;">WW</div></div>
<div style="left:1138px;top:416px;width:91px;height:20px;overflow:hidden;"><div class="c17" style="left:0px;letter-spacing:-1px;">客户还箱</div></div>
<div style="left:1231px;top:416px;width:91px;height:20px;overflow:hidden;"><div class="c17" style="left:0px;letter-spacing:-1px;">津</div><div class="a16" style="left:16px;">C97921</div></div>
<div style="left:1417px;top:416px;width:57px;height:20px;overflow:hidden;"><div class="a16" style="left:0px;">B2-23-0</div></div>
<div style="left:1569px;top:416px;width:74px;height:20px;overflow:hidden;"><div class="c17" style="left:0px;letter-spacing:-1px;">朝华中电—堆场</div></div>
<div class="" style="left:357px;top:419px;width:13px;height:13px;background:#fff;border:1px solid #a0a0a0;"></div>
<div class="" style="left:13px;top:455px;width:1889px;height:1px;background:#ececec;"></div>
<div class="" style="left:1px;top:455px;width:11px;height:1px;background:#fff;"></div>
<div style="left:14px;top:436px;width:91px;height:20px;overflow:hidden;"><div class="c17" style="left:0px;letter-spacing:-1px;">本港退租箱</div></div>
<div style="left:403px;top:436px;width:57px;height:20px;overflow:hidden;"><div class="a16" style="left:0px;">TRHU382</div></div>
<div style="left:462px;top:436px;width:57px;height:20px;overflow:hidden;"><div class="a16" style="left:0px;">20</div></div>
<div style="left:521px;top:436px;width:57px;height:20px;overflow:hidden;"><div class="a16" style="left:0px;">GP</div></div>
<div style="left:580px;top:436px;width:74px;height:20px;overflow:hidden;"><div class="a16" style="left:0px;">COSCO</div></div>
<div style="left:656px;top:436px;width:91px;height:20px;overflow:hidden;"><div class="a16" style="left:0px;">2023-02-20</div></div>
<div style="left:749px;top:436px;width:91px;height:20px;overflow:hidden;"><div class="a16" style="left:0px;">RYI</div></div>
<div style="left:842px;top:436px;width:91px;height:20px;overflow:hidden;"><div class="a16" style="left:0px;">001</div></div>
<div style="left:935px;top:436px;width:108px;height:20px;overflow:hidden;"><div class="a16" style="left:0px;">7243038020</div></div>
<div style="left:1045px;top:436px;width:91px;height:20px;overflow:hidden;"><div class="a16" style="left:0px;">WW</div></div>
<div style="left:1138px;top:436px;width:91px;height:20px;overflow:hidden;"><div class="c17" style="left:0px;letter-spacing:-1px;">客户还箱</div></div>
<div style="left:1231px;top:436px;width:91px;height:20px;overflow:hidden;"><div class="c17" style="left:0px;letter-spacing:-1px;">津</div><div class="a16" style="left:16px;">C16676</div></div>
<div style="left:1417px;top:436px;width:57px;height:20px;overflow:hidden;"><div class="a16" style="left:0px;">B2-23-0</div></div>
<div style="left:1569px;top:436px;width:74px;height:20px;overflow:hidden;"><div class="c17" style="left:0px;letter-spacing:-1px;">朝华中电—堆场</div></div>
<div class="" style="left:357px;top:439px;width:13px;height:13px;background:#fff;border:1px solid #a0a0a0;"></div>
<div class="" style="left:13px;top:475px;width:1889px;height:1px;background:#ececec;"></div>
<div class="" style="left:1px;top:475px;width:11px;height:1px;background:#fff;"></div>
<div style="left:14px;top:456px;width:91px;height:20px;overflow:hidden;"><div class="c17" style="left:0px;letter-spacing:-1px;">本港退租箱</div></div>
<div style="left:403px;top:456px;width:57px;height:20px;overflow:hidden;"><div class="a16" style="left:0px;">CBHU383</div></div>
<div style="left:462px;top:456px;width:57px;height:20px;overflow:hidden;"><div class="a16" style="left:0px;">20</div></div>
<div style="left:521px;top:456px;width:57px;height:20px;overflow:hidden;"><div class="a16" style="left:0px;">GP</div></div>
<div style="left:580px;top:456px;width:74px;height:20px;overflow:hidden;"><div class="a16" style="left:0px;">COSCO</div></div>
<div style="left:656px;top:456px;width:91px;height:20px;overflow:hidden;"><div class="a16" style="left:0px;">2023-02-20</div></div>
<div style="left:749px;top:456px;width:91px;height:20px;overflow:hidden;"><div class="a16" style="left:0px;">RMJ</div></div>
<div style="left:842px;top:456px;width:91px;height:20px;overflow:hidden;"><div class="a16" style="left:0px;">151</div></div>
<div style="left:935px;top:456px;width:108px;height:20px;overflow:hidden;"><div class="a16" style="left:0px;">8028459860</div></div>
<div style="left:1045px;top:456px;width:91px;height:20px;overflow:hidden;"><div class="a16" style="left:0px;">AV</div></div>
<div style="left:1138px;top:456px;width:91px;height:20px;overflow:hidden;"><div class="c17" style="left:0px;letter-spacing:-1px;">客户还箱</div></div>
<div style="left:1231px;top:456px;width:91px;height:20px;overflow:hidden;"><div class="c17" style="left:0px;letter-spacing:-1px;">冀</div><div class="a16" style="left:16px;">EV9676</div></div>
<div style="left:1417px;top:456px;width:57px;height:20px;overflow:hidden;"><div class="a16" style="left:0px;">B2-23-0</div></div>
<div style="left:1569px;top:456px;width:74px;height:20px;overflow:hidden;"><div class="c17" style="left:0px;letter-spacing:-1px;">朝华中电—堆场</div></div>
<div class="" style="left:357px;top:459px;width:13px;height:13px;background:#fff;border:1px solid #a0a0a0;"></div>
<div class="" style="left:13px;top:495px;width:1889px;height:1px;background:#ececec;"></div>
<div class="" style="left:1px;top:495px;width:11px;height:1px;background:#fff;"></div>
<div style="left:14px;top:476px;width:91px;height:20px;overflow:hidden;"><div class="c17" style="left:0px;letter-spacing:-1px;">本港退租箱</div></div>
<div style="left:403px;top:476px;width:57px;height:20px;overflow:hidden;"><div class="a16" style="left:0px;">BMOU103</div></div>
<div style="left:462px;top:476px;width:57px;height:20px;overflow:hidden;"><div class="a16" style="left:0px;">20</div></div>
<div style="left:521px;top:476px;width:57px;height:20px;overflow:hidden;"><div class="a16" style="left:0px;">GP</div></div>
<div style="left:580px;top:476px;width:74px;height:20px;overflow:hidden;"><div class="a16" style="left:0px;">COSCO</div></div>
<div style="left:656px;top:476px;width:91px;height:20px;overflow:hidden;"><div class="a16" style="left:0px;">2023-02-20</div></div>
<div style="left:749px;top:476px;width:91px;height:20px;overflow:hidden;"><div class="a16" style="left:0px;">QSH</div></div>
<div style="left:842px;top:476px;width:91px;height:20px;overflow:hidden;"><div class="a16" style="left:0px;">185</div></div>
<div style="left:935px;top:476px;width:108px;height:20px;overflow:hidden;"><div class="a16" style="left:0px;">D059445080</div></div>
<div style="left:1045px;top:476px;width:91px;height:20px;overflow:hidden;"><div class="a16" style="left:0px;">AV</div></div>
<div style="left:1138px;top:476px;width:91px;height:20px;overflow:hidden;"><div class="c17" style="left:0px;letter-spacing:-1px;">客户还箱</div></div>
<div style="left:1231px;top:476px;width:91px;height:20px;overflow:hidden;"><div class="c17" style="left:0px;letter-spacing:-1px;">冀</div><div class="a16" style="left:16px;">GF5629</div></div>
<div style="left:1417px;top:476px;width:57px;height:20px;overflow:hidden;"><div class="a16" style="left:0px;">B2-23-0</div></div>
<div style="left:1569px;top:476px;width:74px;height:20px;overflow:hidden;"><div class="c17" style="left:0px;letter-spacing:-1px;">朝华中电—堆场</div></div>
<div class="" style="left:357px;top:479px;width:13px;height:13px;background:#fff;border:1px solid #a0a0a0;"></div>
<div class="" style="left:13px;top:515px;width:1889px;height:1px;background:#ececec;"></div>
<div class="" style="left:1px;top:515px;width:11px;height:1px;background:#fff;"></div>
<div style="left:403px;top:496px;width:57px;height:20px;overflow:hidden;"><div class="a16" style="left:0px;">MAGU552</div></div>
<div style="left:462px;top:496px;width:57px;height:20px;overflow:hidden;"><div class="a16" style="left:0px;">40</div></div>
<div style="left:521px;top:496px;width:57px;height:20px;overflow:hidden;"><div class="a16" style="left:0px;">HC</div></div>
<div style="left:580px;top:496px;width:74px;height:20px;overflow:hidden;"><div class="a16" style="left:0px;">COSCO</div></div>
<div style="left:656px;top:496px;width:91px;height:20px;overflow:hidden;"><div class="a16" style="left:0px;">2023-02-20</div></div>
<div style="left:749px;top:496px;width:91px;height:20px;overflow:hidden;"><div class="a16" style="left:0px;">CCL</div></div>
<div style="left:842px;top:496px;width:91px;height:20px;overflow:hidden;"><div class="a16" style="left:0px;">092</div></div>
<div style="left:935px;top:496px;width:108px;height:20px;overflow:hidden;"><div class="a16" style="left:0px;">6348239921</div></div>
<div style="left:1045px;top:496px;width:91px;height:20px;overflow:hidden;"><div class="a16" style="left:0px;">DM</div></div>
<div style="left:1138px;top:496px;width:91px;height:20px;overflow:hidden;"><div class="c17" style="left:0px;letter-spacing:-1px;">客户还箱</div></div>
<div style="left:1231px;top:496px;width:91px;height:20px;overflow:hidden;"><div class="c17" style="left:0px;letter-spacing:-1px;">津</div><div class="a16" style="left:16px;">CH8521</div></div>
<div style="left:1417px;top:496px;width:57px;height:20px;overflow:hidden;"><div class="a16" style="left:0px;">B2-02-0</div></div>
<div style="left:1569px;top:496px;width:74px;height:20px;overflow:hidden;"><div class="c17" style="left:0px;letter-spacing:-1px;">朝华中电—堆场</div></div>
<div class="" style="left:357px;top:499px;width:13px;height:13px;background:#fff;border:1px solid #a0a0a0;"></div>
<div class="" style="left:13px;top:535px;width:1889px;height:1px;background:#ececec;"></div>
<div class="" style="left:1px;top:535px;width:11px;height:1px;background:#fff;"></div>
<div style="left:14px;top:516px;width:91px;height:20px;overflow:hidden;"><div class="c17" style="left:0px;letter-spacing:-1px;">本港退租箱</div></div>
<div style="left:403px;top:516px;width:57px;height:20px;overflow:hidden;"><div class="a16" style="left:0px;">BMOU104</div></div>
<div style="left:462px;top:516px;width:57px;height:20px;overflow:hidden;"><div class="a16" style="left:0px;">20</div></div>
<div style="left:521px;top:516px;width:57px;height:20px;overflow:hidden;"><div class="a16" style="left:0px;">GP</div></div>
<div style="left:580px;top:516px;width:74px;height:20px;overflow:hidden;"><div class="a16" style="left:0px;">COSCO</div></div>
<div style="left:656px;top:516px;width:91px;height:20px;overflow:hidden;"><div class="a16" style="left:0px;">2023-02-20</div></div>
<div style="left:749px;top:516px;width:91px;height:20px;overflow:hidden;"><div class="a16" style="left:0px;">NRY</div></div>
<div style="left:842px;top:516px;width:91px;height:20px;overflow:hidden;"><div class="a16" style="left:0px;">144</div></div>
<div style="left:935px;top:516px;width:108px;height:20px;overflow:hidden;"><div class="a16" style="left:0px;">5158108310</div></div>
<div style="left:1045px;top:516px;width:91px;height:20px;overflow:hidden;"><div class="a16" style="left:0px;">AV</div></div>
<div style="left:1138px;top:516px;width:91px;height:20px;overflow:hidden;"><div class="c17" style="left:0px;letter-spacing:-1px;">客户还箱</div></div>
<div style="left:1231px;top:516px;width:91px;height:20px;overflow:hidden;"><div class="c17" style="left:0px;letter-spacing:-1px;">京</div><div class="a16" style="left:16px;">APP196</div></div>
<div style="left:1417px;top:516px;width:57px;height:20px;overflow:hidden;"><div class="a16" style="left:0px;">B2-23-0</div></div>
<div style="left:1569px;top:516px;width:74px;height:20px;overflow:hidden;"><div class="c17" style="left:0px;letter-spacing:-1px;">朝华中电—堆场</div></div>
<div class="" style="left:357px;top:519px;width:13px;height:13px;background:#fff;border:1px solid #a0a0a0;"></div>
<div class="" style="left:13px;top:555px;width:1889px;height:1px;background:#ececec;"></div>
<div class="" style="left:1px;top:555px;width:11px;height:1px;background:#fff;"></div>
<div style="left:14px;top:536px;width:91px;height:20px;overflow:hidden;"><div class="c17" style="left:0px;letter-spacing:-1px;">本港退租箱</div></div>
<div style="left:403px;top:536px;width:57px;height:20px;overflow:hidden;"><div class="a16" style="left:0px;">SEGU291</div></div>
<div style="left:462px;top:536px;width:57px;height:20px;overflow:hidden;"><div class="a16" style="left:0px;">20</div></div>
<div style="left:521px;top:536px;width:57px;height:20px;overflow:hidden;"><div class="a16" style="left:0px;">GP</div></div>
<div style="left:580px;top:536px;width:74px;height:20px;overflow:hidden;"><div class="a16" style="left:0px;">COSCO</div></div>
<div style="left:656px;top:536px;width:91px;height:20px;overflow:hidden;"><div class="a16" style="left:0px;">2023-02-20</div></div>
<div style="left:749px;top:536px;width:91px;height:20px;overflow:hidden;"><div class="a16" style="left:0px;">SC9</div></div>
<div style="left:842px;top:536px;width:91px;height:20px;overflow:hidden;"><div class="a16" style="left:0px;">218</div></div>
<div style="left:935px;top:536px;width:108px;height:20px;overflow:hidden;"><div class="a16" style="left:0px;">6349309770</div></div>
<div style="left:1045px;top:536px;width:91px;height:20px;overflow:hidden;"><div class="a16" style="left:0px;">WW</div></div>
<div style="left:1138px;top:536px;width:91px;height:20px;overflow:hidden;"><div class="c17" style="left:0px;letter-spacing:-1px;">客户还箱</div></div>
<div style="left:1231px;top:536px;width:91px;height:20px;overflow:hidden;"><div class="c17" style="left:0px;letter-spacing:-1px;">津</div><div class="a16" style="left:16px;">C91038</div></div>
<div style="left:1417px;top:536px;width:57px;height:20px;overflow:hidden;"><div class="a16" style="left:0px;">B2-23-0</div></div>
<div style="left:1569px;top:536px;width:74px;height:20px;overflow:hidden;"><div class="c17" style="left:0px;letter-spacing:-1px;">朝华中电—堆场</div></div>
<div class="" style="left:357px;top:539px;width:13px;height:13px;background:#fff;border:1px solid #a0a0a0;"></div>
<div class="" style="left:13px;top:575px;width:1889px;height:1px;background:#ececec;"></div>
<div class="" style="left:1px;top:575px;width:11px;height:1px;background:#fff;"></div>
<div style="left:14px;top:556px;width:91px;height:20px;overflow:hidden;"><div class="c17" style="left:0px;letter-spacing:-1px;">本港退租箱</div></div>
<div style="left:403px;top:556px;width:57px;height:20px;overflow:hidden;"><div class="a16" style="left:0px;">TCLU197</div></div>
<div style="left:462px;top:556px;width:57px;height:20px;overflow:hidden;"><div class="a16" style="left:0px;">20</div></div>
<div style="left:521px;top:556px;width:57px;height:20px;overflow:hidden;"><div class="a16" style="left:0px;">GP</div></div>
<div style="left:580px;top:556px;width:74px;height:20px;overflow:hidden;"><div class="a16" style="left:0px;">COSCO</div></div>
<div style="left:656px;top:556px;width:91px;height:20px;overflow:hidden;"><div class="a16" style="left:0px;">2023-02-20</div></div>
<div style="left:749px;top:556px;width:91px;height:20px;overflow:hidden;"><div class="a16" style="left:0px;">CSF</div></div>
<div style="left:842px;top:556px;width:91px;height:20px;overflow:hidden;"><div class="a16" style="left:0px;">021</div></div>
<div style="left:935px;top:556px;width:108px;height:20px;overflow:hidden;"><div class="a16" style="left:0px;">6349129830</div></div>
<div style="left:1045px;top:556px;width:91px;height:20px;overflow:hidden;"><div class="a16" style="left:0px;">WW</div></div>
<div style="left:1138px;top:556px;width:91px;height:20px;overflow:hidden;"><div class="c17" style="left:0px;letter-spacing:-1px;">客户还箱</div></div>
<div style="left:1231px;top:556px;width:91px;height:20px;overflow:hidden;"><div class="c17" style="left:0px;letter-spacing:-1px;">津</div><div class="a16" style="left:16px;">C56132</div></div>
<div style="left:1417px;top:556px;width:57px;height:20px;overflow:hidden;"><div class="a16" style="left:0px;">B2-23-0</div></div>
<div style="left:1569px;top:556px;width:74px;height:20px;overflow:hidden;"><div class="c17" style="left:0px;letter-spacing:-1px;">朝华中电—堆场</div></div>
<div class="" style="left:357px;top:559px;width:13px;height:13px;background:#fff;border:1px solid #a0a0a0;"></div>
<div class="" style="left:13px;top:595px;width:1889px;height:1px;background:#ececec;"></div>
<div class="" style="left:1px;top:595px;width:11px;height:1px;background:#fff;"></div>
<div style="left:14px;top:576px;width:91px;height:20px;overflow:hidden;"><div class="c17" style="left:0px;letter-spacing:-1px;">本港退租箱</div></div>
<div style="left:403px;top:576px;width:57px;height:20px;overflow:hidden;"><div class="a16" style="left:0px;">TCNU374</div></div>
<div style="left:462px;top:576px;width:57px;height:20px;overflow:hidden;"><div class="a16" style="left:0px;">40</div></div>
<div style="left:521px;top:576px;width:57px;height:20px;overflow:hidden;"><div class="a16" style="left:0px;">HC</div></div>
<div style="left:580px;top:576px;width:74px;height:20px;overflow:hidden;"><div class="a16" style="left:0px;">COSCO</div></div>
<div style="left:656px;top:576px;width:91px;height:20px;overflow:hidden;"><div class="a16" style="left:0px;">2023-02-19</div></div>
<div style="left:749px;top:576px;width:91px;height:20px;overflow:hidden;"><div class="a16" style="left:0px;">CSF</div></div>
<div style="left:842px;top:576px;width:91px;height:20px;overflow:hidden;"><div class="a16" style="left:0px;">021</div></div>
<div style="left:935px;top:576px;width:108px;height:20px;overflow:hidden;"><div class="a16" style="left:0px;">6346932270</div></div>
<div style="left:1045px;top:576px;width:91px;height:20px;overflow:hidden;"><div class="a16" style="left:0px;">AV</div></div>
<div style="left:1138px;top:576px;width:91px;height:20px;overflow:hidden;"><div class="c17" style="left:0px;letter-spacing:-1px;">客户还箱</div></div>
<div style="left:1231px;top:576px;width:91px;height:20px;overflow:hidden;"><div class="c17" style="left:0px;letter-spacing:-1px;">津</div><div class="a16" style="left:16px;">C16306</div></div>
<div style="left:1417px;top:576px;width:57px;height:20px;overflow:hidden;"><div class="a16" style="left:0px;">B2-02-0</div></div>
<div style="left:1569px;top:576px;width:74px;height:20px;overflow:hidden;"><div class="c17" style="left:0px;letter-spacing:-1px;">朝华中电—堆场</div></div>
<div class="" style="left:357px;top:579px;width:13px;height:13px;background:#fff;border:1px solid #a0a0a0;"></div>
<div class="" style="left:13px;top:615px;width:1889px;height:1px;background:#ececec;"></div>
<div class="" style="left:1px;top:615px;width:11px;height:1px;background:#fff;"></div>
<div style="left:14px;top:596px;width:91px;height:20px;overflow:hidden;"><div class="c17" style="left:0px;letter-spacing:-1px;">本港退租箱</div></div>
<div style="left:403px;top:596px;width:57px;height:20px;overflow:hidden;"><div class="a16" style="left:0px;">TCLU193</div></div>
<div style="left:462px;top:596px;width:57px;height:20px;overflow:hidden;"><div class="a16" style="left:0px;">20</div></div>
<div style="left:521px;top:596px;width:57px;height:20px;overflow:hidden;"><div class="a16" style="left:0px;">GP</div></div>
<div style="left:580px;top:596px;width:74px;height:20px;overflow:hidden;"><div class="a16" style="left:0px;">COSCO</div></div>
<div style="left:656px;top:596px;width:91px;height:20px;overflow:hidden;"><div class="a16" style="left:0px;">2023-02-19</div></div>
<div style="left:749px;top:596px;width:91px;height:20px;overflow:hidden;"><div class="a16" style="left:0px;">NPL</div></div>
<div style="left:842px;top:596px;width:91px;height:20px;overflow:hidden;"><div class="a16" style="left:0px;">058</div></div>
<div style="left:935px;top:596px;width:108px;height:20px;overflow:hidden;"><div class="a16" style="left:0px;">Q058659382</div></div>
<div style="left:1045px;top:596px;width:91px;height:20px;overflow:hidden;"><div class="a16" style="left:0px;">DM</div></div>
<div style="left:1138px;top:596px;width:91px;height:20px;overflow:hidden;"><div class="c17" style="left:0px;letter-spacing:-1px;">客户还箱</div></div>
<div style="left:1231px;top:596px;width:91px;height:20px;overflow:hidden;"><div class="c17" style="left:0px;letter-spacing:-1px;">冀</div><div class="a16" style="left:16px;">B6591M</div></div>
<div style="left:1417px;top:596px;width:57px;height:20px;overflow:hidden;"><div class="a16" style="left:0px;">B2-23-0</div></div>
<div style="left:1569px;top:596px;width:74px;height:20px;overflow:hidden;"><div class="c17" style="left:0px;letter-spacing:-1px;">朝华中电—堆场</div></div>
<div class="" style="left:357px;top:599px;width:13px;height:13px;background:#fff;border:1px solid #a0a0a0;"></div>
<div class="" style="left:13px;top:635px;width:1889px;height:1px;background:#ececec;"></div>
<div class="" style="left:1px;top:635px;width:11px;height:1px;background:#fff;"></div>
<div style="left:14px;top:616px;width:91px;height:20px;overflow:hidden;"><div class="c17" style="left:0px;letter-spacing:-1px;">本港退租箱</div></div>
<div style="left:403px;top:616px;width:57px;height:20px;overflow:hidden;"><div class="a16" style="left:0px;">SEGU290</div></div>
<div style="left:462px;top:616px;width:57px;height:20px;overflow:hidden;"><div class="a16" style="left:0px;">20</div></div>
<div style="left:521px;top:616px;width:57px;height:20px;overflow:hidden;"><div class="a16" style="left:0px;">GP</div></div>
<div style="left:580px;top:616px;width:74px;height:20px;overflow:hidden;"><div class="a16" style="left:0px;">COSCO</div></div>
<div style="left:656px;top:616px;width:91px;height:20px;overflow:hidden;"><div class="a16" style="left:0px;">2023-02-19</div></div>
<div style="left:749px;top:616px;width:91px;height:20px;overflow:hidden;"><div class="a16" style="left:0px;">NPL</div></div>
<div style="left:842px;top:616px;width:91px;height:20px;overflow:hidden;"><div class="a16" style="left:0px;">058</div></div>
<div style="left:935px;top:616px;width:108px;height:20px;overflow:hidden;"><div class="a16" style="left:0px;">Q058711350</div></div>
<div style="left:1045px;top:616px;width:91px;height:20px;overflow:hidden;"><div class="a16" style="left:0px;">AV</div></div>
<div style="left:1138px;top:616px;width:91px;height:20px;overflow:hidden;"><div class="c17" style="left:0px;letter-spacing:-1px;">客户还箱</div></div>
<div style="left:1231px;top:616px;width:91px;height:20px;overflow:hidden;"><div class="c17" style="left:0px;letter-spacing:-1px;">冀</div><div class="a16" style="left:16px;">B6591M</div></div>
<div style="left:1417px;top:616px;width:57px;height:20px;overflow:hidden;"><div class="a16" style="left:0px;">B2-23-0</div></div>
<div style="left:1569px;top:616px;width:74px;height:20px;overflow:hidden;"><div class="c17" style="left:0px;letter-spacing:-1px;">朝华中电—堆场</div></div>
<div class="" style="left:357px;top:619px;width:13px;height:13px;background:#fff;border:1px solid #a0a0a0;"></div>
<div class="" style="left:13px;top:655px;width:1889px;height:1px;background:#ececec;"></div>
<div class="" style="left:1px;top:655px;width:11px;height:1px;background:#fff;"></div>
<div style="left:14px;top:636px;width:91px;height:20px;overflow:hidden;"><div class="c17" style="left:0px;letter-spacing:-1px;">本港退租箱</div></div>
<div style="left:403px;top:636px;width:57px;height:20px;overflow:hidden;"><div class="a16" style="left:0px;">TLLU205</div></div>
<div style="left:462px;top:636px;width:57px;height:20px;overflow:hidden;"><div class="a16" style="left:0px;">20</div></div>
<div style="left:521px;top:636px;width:57px;height:20px;overflow:hidden;"><div class="a16" style="left:0px;">GP</div></div>
<div style="left:580px;top:636px;width:74px;height:20px;overflow:hidden;"><div class="a16" style="left:0px;">COSCO</div></div>
<div style="left:656px;top:636px;width:91px;height:20px;overflow:hidden;"><div class="a16" style="left:0px;">2023-02-19</div></div>
<div style="left:749px;top:636px;width:91px;height:20px;overflow:hidden;"><div class="a16" style="left:0px;">QSH</div></div>
<div style="left:842px;top:636px;width:91px;height:20px;overflow:hidden;"><div class="a16" style="left:0px;">185</div></div>
<div style="left:935px;top:636px;width:108px;height:20px;overflow:hidden;"><div class="a16" style="left:0px;">Q059158290</div></div>
<div style="left:1045px;top:636px;width:91px;height:20px;overflow:hidden;"><div class="a16" style="left:0px;">AV</div></div>
<div style="left:1138px;top:636px;width:91px;height:20px;overflow:hidden;"><div class="c17" style="left:0px;letter-spacing:-1px;">客户还箱</div></div>
<div style="left:1231px;top:636px;width:91px;height:20px;overflow:hidden;"><div class="c17" style="left:0px;letter-spacing:-1px;">津</div><div class="a16" style="left:16px;">C01725</div></div>
<div style="left:1417px;top:636px;width:57px;height:20px;overflow:hidden;"><div class="a16" style="left:0px;">B2-23-0</div></div>
<div style="left:1569px;top:636px;width:74px;height:20px;overflow:hidden;"><div class="c17" style="left:0px;letter-spacing:-1px;">朝华中电—堆场</div></div>
<div class="" style="left:357px;top:639px;width:13px;height:13px;background:#fff;border:1px solid #a0a0a0;"></div>
<div class="" style="left:13px;top:675px;width:1889px;height:1px;background:#ececec;"></div>
<div class="" style="left:1px;top:675px;width:11px;height:1px;background:#fff;"></div>
<div style="left:14px;top:656px;width:91px;height:20px;overflow:hidden;"><div class="c17" style="left:0px;letter-spacing:-1px;">本港退租箱</div></div>
<div style="left:403px;top:656px;width:57px;height:20px;overflow:hidden;"><div class="a16" style="left:0px;">TRHU395</div></div>
<div style="left:462px;top:656px;width:57px;height:20px;overflow:hidden;"><div class="a16" style="left:0px;">20</div></div>
<div style="left:521px;top:656px;width:57px;height:20px;overflow:hidden;"><div class="a16" style="left:0px;">GP</div></div>
<div style="left:580px;top:656px;width:74px;height:20px;overflow:hidden;"><div class="a16" style="left:0px;">COSCO</div></div>
<div style="left:656px;top:656px;width:91px;height:20px;overflow:hidden;"><div class="a16" style="left:0px;">2023-02-19</div></div>
<div style="left:749px;top:656px;width:91px;height:20px;overflow:hidden;"><div class="a16" style="left:0px;">QSH</div></div>
<div style="left:842px;top:656px;width:91px;height:20px;overflow:hidden;"><div class="a16" style="left:0px;">185</div></div>
<div style="left:935px;top:656px;width:108px;height:20px;overflow:hidden;"><div class="a16" style="left:0px;">Q059133730</div></div>
<div style="left:1045px;top:656px;width:91px;height:20px;overflow:hidden;"><div class="a16" style="left:0px;">AV</div></div>
<div style="left:1138px;top:656px;width:91px;height:20px;overflow:hidden;"><div class="c17" style="left:0px;letter-spacing:-1px;">客户还箱</div></div>
<div style="left:1231px;top:656px;width:91px;height:20px;overflow:hidden;"><div class="c17" style="left:0px;letter-spacing:-1px;">津</div><div class="a16" style="left:16px;">C01725</div></div>
<div style="left:1417px;top:656px;width:57px;height:20px;overflow:hidden;"><div class="a16" style="left:0px;">B2-23-0</div></div>
<div style="left:1569px;top:656px;width:74px;height:20px;overflow:hidden;"><div class="c17" style="left:0px;letter-spacing:-1px;">朝华中电—堆场</div></div>
<div class="" style="left:357px;top:659px;width:13px;height:13px;background:#fff;border:1px solid #a0a0a0;"></div>
<div class="" style="left:13px;top:695px;width:1889px;height:1px;background:#ececec;"></div>
<div class="" style="left:1px;top:695px;width:11px;height:1px;background:#fff;"></div>
<div style="left:14px;top:676px;width:91px;height:20px;overflow:hidden;"><div class="c17" style="left:0px;letter-spacing:-1px;">本港退租箱</div></div>
<div style="left:403px;top:676px;width:57px;height:20px;overflow:hidden;"><div class="a16" style="left:0px;">TRHU385</div></div>
<div style="left:462px;top:676px;width:57px;height:20px;overflow:hidden;"><div class="a16" style="left:0px;">20</div></div>
<div style="left:521px;top:676px;width:57px;height:20px;overflow:hidden;"><div class="a16" style="left:0px;">GP</div></div>
<div style="left:580px;top:676px;width:74px;height:20px;overflow:hidden;"><div class="a16" style="left:0px;">COSCO</div></div>
<div style="left:656px;top:676px;width:91px;height:20px;overflow:hidden;"><div class="a16" style="left:0px;">2023-02-19</div></div>
<div style="left:749px;top:676px;width:91px;height:20px;overflow:hidden;"><div class="a16" style="left:0px;">RMJ</div></div>
<div style="left:842px;top:676px;width:91px;height:20px;overflow:hidden;"><div class="a16" style="left:0px;">151</div></div>
<div style="left:935px;top:676px;width:108px;height:20px;overflow:hidden;"><div class="a16" style="left:0px;">8028459860</div></div>
<div style="left:1045px;top:676px;width:91px;height:20px;overflow:hidden;"><div class="a16" style="left:0px;">AV</div></div>
<div style="left:1138px;top:676px;width:91px;height:20px;overflow:hidden;"><div class="c17" style="left:0px;letter-spacing:-1px;">客户还箱</div></div>
<div style="left:1231px;top:676px;width:91px;height:20px;overflow:hidden;"><div class="c17" style="left:0px;letter-spacing:-1px;">津</div><div class="a16" style="left:16px;">C91302</div></div>
<div style="left:1417px;top:676px;width:57px;height:20px;overflow:hidden;"><div class="a16" style="left:0px;">B2-23-0</div></div>
<div style="left:1569px;top:676px;width:74px;height:20px;overflow:hidden;"><div class="c17" style="left:0px;letter-spacing:-1px;">朝华中电—堆场</div></div>
<div class="" style="left:357px;top:679px;width:13px;height:13px;background:#fff;border:1px solid #a0a0a0;"></div>
<div class="" style="left:13px;top:715px;width:1889px;height:1px;background:#ececec;"></div>
<div class="" style="left:1px;top:715px;width:11px;height:1px;background:#fff;"></div>
<div style="left:14px;top:696px;width:91px;height:20px;overflow:hidden;"><div class="c17" style="left:0px;letter-spacing:-1px;">本港退租箱</div></div>
<div style="left:403px;top:696px;width:57px;height:20px;overflow:hidden;"><div class="a16" style="left:0px;">SEGU294</div></div>
<div style="left:462px;top:696px;width:57px;height:20px;overflow:hidden;"><div class="a16" style="left:0px;">20</div></div>
<div style="left:521px;top:696px;width:57px;height:20px;overflow:hidden;"><div class="a16" style="left:0px;">GP</div></div>
<div style="left:580px;top:696px;width:74px;height:20px;overflow:hidden;"><div class="a16" style="left:0px;">COSCO</div></div>
<div style="left:656px;top:696px;width:91px;height:20px;overflow:hidden;"><div class="a16" style="left:0px;">2023-02-19</div></div>
<div style="left:749px;top:696px;width:91px;height:20px;overflow:hidden;"><div class="a16" style="left:0px;">CSF</div></div>
<div style="left:842px;top:696px;width:91px;height:20px;overflow:hidden;"><div class="a16" style="left:0px;">021</div></div>
<div style="left:935px;top:696px;width:108px;height:20px;overflow:hidden;"><div class="a16" style="left:0px;">6348923130</div></div>
<div style="left:1045px;top:696px;width:91px;height:20px;overflow:hidden;"><div class="a16" style="left:0px;">DM</div></div>
<div style="left:1138px;top:696px;width:91px;height:20px;overflow:hidden;"><div class="c17" style="left:0px;letter-spacing:-1px;">客户还箱</div></div>
<div style="left:1231px;top:696px;width:91px;height:20px;overflow:hidden;"><div class="c17" style="left:0px;letter-spacing:-1px;">津</div><div class="a16" style="left:16px;">AZ0619</div></div>
<div style="left:1417px;top:696px;width:57px;height:20px;overflow:hidden;"><div class="a16" style="left:0px;">B2-23-0</div></div>
<div style="left:1569px;top:696px;width:74px;height:20px;overflow:hidden;"><div class="c17" style="left:0px;letter-spacing:-1px;">朝华中电—堆场</div></div>
<div class="" style="left:357px;top:699px;width:13px;height:13px;background:#fff;border:1px solid #a0a0a0;"></div>
<div class="" style="left:13px;top:735px;width:1889px;height:1px;background:#ececec;"></div>
<div class="" style="left:1px;top:735px;width:11px;height:1px;background:#fff;"></div>
<div style="left:14px;top:716px;width:91px;height:20px;overflow:hidden;"><div class="c17" style="left:0px;letter-spacing:-1px;">本港退租箱</div></div>
<div style="left:403px;top:716px;width:57px;height:20px;overflow:hidden;"><div class="a16" style="left:0px;">SEGU313</div></div>
<div style="left:462px;top:716px;width:57px;height:20px;overflow:hidden;"><div class="a16" style="left:0px;">20</div></div>
<div style="left:521px;top:716px;width:57px;height:20px;overflow:hidden;"><div class="a16" style="left:0px;">GP</div></div>
<div style="left:580px;top:716px;width:74px;height:20px;overflow:hidden;"><div class="a16" style="left:0px;">COSCO</div></div>
<div style="left:656px;top:716px;width:91px;height:20px;overflow:hidden;"><div class="a16" style="left:0px;">2023-02-19</div></div>
<div style="left:749px;top:716px;width:91px;height:20px;overflow:hidden;"><div class="a16" style="left:0px;">CAT</div></div>
<div style="left:842px;top:716px;width:91px;height:20px;overflow:hidden;"><div class="a16" style="left:0px;">105</div></div>
<div style="left:935px;top:716px;width:108px;height:20px;overflow:hidden;"><div class="a16" style="left:0px;">7883800170</div></div>
<div style="left:1045px;top:716px;width:91px;height:20px;overflow:hidden;"><div class="a16" style="left:0px;">DM</div></div>
<div style="left:1138px;top:716px;width:91px;height:20px;overflow:hidden;"><div class="c17" style="left:0px;letter-spacing:-1px;">客户还箱</div></div>
<div style="left:1231px;top:716px;width:91px;height:20px;overflow:hidden;"><div class="c17" style="left:0px;letter-spacing:-1px;">津</div><div class="a16" style="left:16px;">C97379</div></div>
<div style="left:1417px;top:716px;width:57px;height:20px;overflow:hidden;"><div class="a16" style="left:0px;">B2-23-0</div></div>
<div style="left:1569px;top:716px;width:74px;height:20px;overflow:hidden;"><div class="c17" style="left:0px;letter-spacing:-1px;">朝华中电—堆场</div></div>
<div class="" style="left:357px;top:719px;width:13px;height:13px;background:#fff;border:1px solid #a0a0a0;"></div>
<div class="" style="left:13px;top:755px;width:1889px;height:1px;background:#ececec;"></div>
<div class="" style="left:1px;top:755px;width:11px;height:1px;background:#fff;"></div>
<div style="left:403px;top:736px;width:57px;height:20px;overflow:hidden;"><div class="a16" style="left:0px;">OOLU539</div></div>
<div style="left:462px;top:736px;width:57px;height:20px;overflow:hidden;"><div class="a16" style="left:0px;">45</div></div>
<div style="left:521px;top:736px;width:57px;height:20px;overflow:hidden;"><div class="a16" style="left:0px;">HC</div></div>
<div style="left:580px;top:736px;width:74px;height:20px;overflow:hidden;"><div class="a16" style="left:0px;">COSCO</div></div>
<div style="left:656px;top:736px;width:91px;height:20px;overflow:hidden;"><div class="a16" style="left:0px;">2023-02-19</div></div>
<div style="left:1045px;top:736px;width:91px;height:20px;overflow:hidden;"><div class="a16" style="left:0px;">AV</div></div>
<div style="left:1138px;top:736px;width:91px;height:20px;overflow:hidden;"><div class="c17" style="left:0px;letter-spacing:-1px;">起租（进场）</div></div>
<div style="left:1417px;top:736px;width:57px;height:20px;overflow:hidden;"><div class="a16" style="left:0px;">B3-30-0</div></div>
<div style="left:1569px;top:736px;width:74px;height:20px;overflow:hidden;"><div class="c17" style="left:0px;letter-spacing:-1px;">朝华中电—堆场</div></div>
<div class="" style="left:357px;top:739px;width:13px;height:13px;background:#fff;border:1px solid #a0a0a0;"></div>
<div class="" style="left:13px;top:775px;width:1889px;height:1px;background:#ececec;"></div>
<div class="" style="left:1px;top:775px;width:11px;height:1px;background:#fff;"></div>
<div style="left:403px;top:756px;width:57px;height:20px;overflow:hidden;"><div class="a16" style="left:0px;">OOLU907</div></div>
<div style="left:462px;top:756px;width:57px;height:20px;overflow:hidden;"><div class="a16" style="left:0px;">45</div></div>
<div style="left:521px;top:756px;width:57px;height:20px;overflow:hidden;"><div class="a16" style="left:0px;">HC</div></div>
<div style="left:580px;top:756px;width:74px;height:20px;overflow:hidden;"><div class="a16" style="left:0px;">COSCO</div></div>
<div style="left:656px;top:756px;width:91px;height:20px;overflow:hidden;"><div class="a16" style="left:0px;">2023-02-19</div></div>
<div style="left:1045px;top:756px;width:91px;height:20px;overflow:hidden;"><div class="a16" style="left:0px;">AV</div></div>
<div style="left:1138px;top:756px;width:91px;height:20px;overflow:hidden;"><div class="c17" style="left:0px;letter-spacing:-1px;">起租（进场）</div></div>
<div style="left:1417px;top:756px;width:57px;height:20px;overflow:hidden;"><div class="a16" style="left:0px;">B3-30-0</div></div>
<div style="left:1569px;top:756px;width:74px;height:20px;overflow:hidden;"><div class="c17" style="left:0px;letter-spacing:-1px;">朝华中电—堆场</div></div>
<div class="" style="left:357px;top:759px;width:13px;height:13px;background:#fff;border:1px solid #a0a0a0;"></div>
<div class="" style="left:13px;top:795px;width:1889px;height:1px;background:#ececec;"></div>
<div class="" style="left:1px;top:795px;width:11px;height:1px;background:#fff;"></div>
<div style="left:14px;top:776px;width:91px;height:20px;overflow:hidden;"><div class="c17" style="left:0px;letter-spacing:-1px;">本港退租箱</div></div>
<div style="left:403px;top:776px;width:57px;height:20px;overflow:hidden;"><div class="a16" style="left:0px;">SEGU500</div></div>
<div style="left:462px;top:776px;width:57px;height:20px;overflow:hidden;"><div class="a16" style="left:0px;">40</div></div>
<div style="left:521px;top:776px;width:57px;height:20px;overflow:hidden;"><div class="a16" style="left:0px;">HC</div></div>
<div style="left:580px;top:776px;width:74px;height:20px;overflow:hidden;"><div class="a16" style="left:0px;">COSCO</div></div>
<div style="left:656px;top:776px;width:91px;height:20px;overflow:hidden;"><div class="a16" style="left:0px;">2023-02-18</div></div>
<div style="left:749px;top:776px;width:91px;height:20px;overflow:hidden;"><div class="a16" style="left:0px;">CCL</div></div>
<div style="left:842px;top:776px;width:91px;height:20px;overflow:hidden;"><div class="a16" style="left:0px;">092</div></div>
<div style="left:935px;top:776px;width:108px;height:20px;overflow:hidden;"><div class="a16" style="left:0px;">8027588960</div></div>
<div style="left:1045px;top:776px;width:91px;height:20px;overflow:hidden;"><div class="a16" style="left:0px;">AV</div></div>
<div style="left:1138px;top:776px;width:91px;height:20px;overflow:hidden;"><div class="c17" style="left:0px;letter-spacing:-1px;">客户还箱</div></div>
<div style="left:1231px;top:776px;width:91px;height:20px;overflow:hidden;"><div class="c17" style="left:0px;letter-spacing:-1px;">津</div><div class="a16" style="left:16px;">C68166</div></div>
<div style="left:1417px;top:776px;width:57px;height:20px;overflow:hidden;"><div class="a16" style="left:0px;">B2-02-0</div></div>
<div style="left:1569px;top:776px;width:74px;height:20px;overflow:hidden;"><div class="c17" style="left:0px;letter-spacing:-1px;">朝华中电—堆场</div></div>
<div class="" style="left:357px;top:779px;width:13px;height:13px;background:#fff;border:1px solid #a0a0a0;"></div>
<div class="" style="left:13px;top:815px;width:1889px;height:1px;background:#ececec;"></div>
<div class="" style="left:1px;top:815px;width:11px;height:1px;background:#fff;"></div>
<div style="left:14px;top:796px;width:91px;height:20px;overflow:hidden;"><div class="c17" style="left:0px;letter-spacing:-1px;">本港退租箱</div></div>
<div style="left:403px;top:796px;width:57px;height:20px;overflow:hidden;"><div class="a16" style="left:0px;">SEGU291</div></div>
<div style="left:462px;top:796px;width:57px;height:20px;overflow:hidden;"><div class="a16" style="left:0px;">20</div></div>
<div style="left:521px;top:796px;width:57px;height:20px;overflow:hidden;"><div class="a16" style="left:0px;">GP</div></div>
<div style="left:580px;top:796px;width:74px;height:20px;overflow:hidden;"><div class="a16" style="left:0px;">COSCO</div></div>
<div style="left:656px;top:796px;width:91px;height:20px;overflow:hidden;"><div class="a16" style="left:0px;">2023-02-17</div></div>
<div style="left:749px;top:796px;width:91px;height:20px;overflow:hidden;"><div class="a16" style="left:0px;">QRR</div></div>
<div style="left:842px;top:796px;width:91px;height:20px;overflow:hidden;"><div class="a16" style="left:0px;">331</div></div>
<div style="left:935px;top:796px;width:108px;height:20px;overflow:hidden;"><div class="a16" style="left:0px;">Q058603450</div></div>
<div style="left:1045px;top:796px;width:91px;height:20px;overflow:hidden;"><div class="a16" style="left:0px;">AV</div></div>
<div style="left:1138px;top:796px;width:91px;height:20px;overflow:hidden;"><div class="c17" style="left:0px;letter-spacing:-1px;">客户还箱</div></div>
<div style="left:1231px;top:796px;width:91px;height:20px;overflow:hidden;"><div class="c17" style="left:0px;letter-spacing:-1px;">冀</div><div class="a16" style="left:16px;">J8J592</div></div>
<div style="left:1417px;top:796px;width:57px;height:20px;overflow:hidden;"><div class="a16" style="left:0px;">B1-17-0</div></div>
<div style="left:1569px;top:796px;width:74px;height:20px;overflow:hidden;"><div class="c17" style="left:0px;letter-spacing:-1px;">朝华中电—堆场</div></div>
<div class="" style="left:357px;top:799px;width:13px;height:13px;background:#fff;border:1px solid #a0a0a0;"></div>
<div class="" style="left:13px;top:296px;width:92px;height:19px;border:1px solid #000;"></div>
<svg style="position:absolute;left:4px;top:301px" width="6" height="10" viewBox="0 0 6 10"><path d="M0 0L5 5L0 10Z" fill="#000"/></svg>
<div class="" style="left:1902px;top:246px;width:18px;height:589px;background:#f8f8f8;"></div>
<div class="" style="left:1902px;top:247px;width:18px;height:16px;background:#f0f0f0;border-top:1px solid #fff;border-left:1px solid #fff;border-right:1px solid #696969;border-bottom:1px solid #696969;box-shadow:inset -1px -1px 0 #a0a0a0;"></div>
<svg style="position:absolute;left:1907px;top:252px" width="8" height="5"><path d="M0 4H8L4 0Z" fill="#000"/></svg>
<div class="" style="left:1902px;top:263px;width:18px;height:18px;background:#f0f0f0;border-top:1px solid #fff;border-left:1px solid #fff;border-right:1px solid #696969;border-bottom:1px solid #696969;box-shadow:inset -1px -1px 0 #a0a0a0;"></div>
<div class="" style="left:1902px;top:819px;width:18px;height:16px;background:#f0f0f0;border-top:1px solid #fff;border-left:1px solid #fff;border-right:1px solid #696969;border-bottom:1px solid #696969;box-shadow:inset -1px -1px 0 #a0a0a0;"></div>
<svg style="position:absolute;left:1907px;top:825px" width="8" height="5"><path d="M0 0H8L4 4Z" fill="#000"/></svg>
<div class="" style="left:1px;top:835px;width:1901px;height:17px;background:#f8f8f8;"></div>
<div class="" style="left:1px;top:835px;width:17px;height:17px;background:#f0f0f0;border-top:1px solid #fff;border-left:1px solid #fff;border-right:1px solid #696969;border-bottom:1px solid #696969;box-shadow:inset -1px -1px 0 #a0a0a0;"></div>
<svg style="position:absolute;left:6px;top:839px" width="5" height="8"><path d="M4 0V8L0 4Z" fill="#000"/></svg>
<div class="" style="left:17px;top:835px;width:367px;height:17px;background:#f0f0f0;border-top:1px solid #fff;border-left:1px solid #fff;border-right:1px solid #696969;border-bottom:1px solid #696969;box-shadow:inset -1px -1px 0 #a0a0a0;"></div>
<div class="" style="left:1886px;top:835px;width:16px;height:17px;background:#f0f0f0;border-top:1px solid #fff;border-left:1px solid #fff;border-right:1px solid #696969;border-bottom:1px solid #696969;box-shadow:inset -1px -1px 0 #a0a0a0;"></div>
<svg style="position:absolute;left:1892px;top:839px" width="5" height="8"><path d="M0 0V8L4 4Z" fill="#000"/></svg>
<div class="" style="left:1902px;top:835px;width:18px;height:17px;background:#f0f0f0;"></div>
<div class="" style="left:0px;top:852px;width:1920px;height:1px;background:#f8f8f8;"></div>
<div class="" style="left:0px;top:853px;width:1920px;height:1px;background:#a0a0a0;"></div>
<div class="" style="left:0px;top:854px;width:1920px;height:2px;background:#f8f8f8;"></div>
<div class="" style="left:0px;top:856px;width:1920px;height:1px;background:#a0a0a0;"></div>
<div class="" style="left:0px;top:857px;width:1920px;height:2px;background:#fff;"></div>
<div class="" style="left:0px;top:859px;width:1902px;height:183px;background:#fff;"></div>
<div class="" style="left:0px;top:859px;width:1px;height:183px;background:#a0a0a0;"></div>
<div class="" style="left:1px;top:860px;width:1901px;height:18px;background:#f0f0f0;"></div>
<div class="" style="left:1px;top:859px;width:84px;height:1px;background:#a0a0a0;"></div>
<div class="" style="left:85px;top:859px;width:640px;height:1px;background:#202020;"></div>
<div class="" style="left:725px;top:859px;width:1177px;height:1px;background:#a0a0a0;"></div>
<div class="" style="left:1px;top:878px;width:1901px;height:1px;background:#a0a0a0;"></div>
<div class="" style="left:1px;top:860px;width:1px;height:18px;background:#fff;"></div>
<div class="" style="left:85px;top:859px;width:1px;height:20px;background:#303030;"></div>
<div class="" style="left:86px;top:860px;width:1px;height:18px;background:#fff;"></div>
<div class="" style="left:125px;top:859px;width:1px;height:20px;background:#303030;"></div>
<div class="" style="left:126px;top:860px;width:1px;height:18px;background:#fff;"></div>
<div class="" style="left:165px;top:859px;width:1px;height:20px;background:#303030;"></div>
<div class="" style="left:166px;top:860px;width:1px;height:18px;background:#fff;"></div>
<div class="" style="left:205px;top:859px;width:1px;height:20px;background:#303030;"></div>
<div class="" style="left:206px;top:860px;width:1px;height:18px;background:#fff;"></div>
<div class="" style="left:245px;top:859px;width:1px;height:20px;background:#303030;"></div>
<div class="" style="left:246px;top:860px;width:1px;height:18px;background:#fff;"></div>
<div class="" style="left:285px;top:859px;width:1px;height:20px;background:#303030;"></div>
<div class="" style="left:286px;top:860px;width:1px;height:18px;background:#fff;"></div>
<div class="" style="left:325px;top:859px;width:1px;height:20px;background:#303030;"></div>
<div class="" style="left:326px;top:860px;width:1px;height:18px;background:#fff;"></div>
<div class="" style="left:365px;top:859px;width:1px;height:20px;background:#303030;"></div>
<div class="" style="left:366px;top:860px;width:1px;height:18px;background:#fff;"></div>
<div class="" style="left:405px;top:859px;width:1px;height:20px;background:#303030;"></div>
<div class="" style="left:406px;top:860px;width:1px;height:18px;background:#fff;"></div>
<div class="" style="left:445px;top:859px;width:1px;height:20px;background:#303030;"></div>
<div class="" style="left:446px;top:860px;width:1px;height:18px;background:#fff;"></div>
<div class="" style="left:485px;top:859px;width:1px;height:20px;background:#303030;"></div>
<div class="" style="left:486px;top:860px;width:1px;height:18px;background:#fff;"></div>
<div class="" style="left:525px;top:859px;width:1px;height:20px;background:#303030;"></div>
<div class="" style="left:526px;top:860px;width:1px;height:18px;background:#fff;"></div>
<div class="" style="left:565px;top:859px;width:1px;height:20px;background:#303030;"></div>
<div class="" style="left:566px;top:860px;width:1px;height:18px;background:#fff;"></div>
<div class="" style="left:605px;top:859px;width:1px;height:20px;background:#303030;"></div>
<div class="" style="left:606px;top:860px;width:1px;height:18px;background:#fff;"></div>
<div class="" style="left:645px;top:859px;width:1px;height:20px;background:#303030;"></div>
<div class="" style="left:646px;top:860px;width:1px;height:18px;background:#fff;"></div>
<div class="" style="left:685px;top:859px;width:1px;height:20px;background:#303030;"></div>
<div class="" style="left:686px;top:860px;width:1px;height:18px;background:#fff;"></div>
<div class="" style="left:725px;top:859px;width:1px;height:20px;background:#303030;"></div>
<div class="" style="left:726px;top:860px;width:1px;height:18px;background:#fff;"></div>
<div class="" style="left:765px;top:859px;width:1px;height:20px;background:#a0a0a0;"></div>
<div class="" style="left:766px;top:860px;width:1px;height:18px;background:#fff;"></div>
<div class="" style="left:805px;top:859px;width:1px;height:20px;background:#a0a0a0;"></div>
<div class="" style="left:806px;top:860px;width:1px;height:18px;background:#fff;"></div>
<div class="" style="left:845px;top:859px;width:1px;height:20px;background:#a0a0a0;"></div>
<div class="" style="left:846px;top:860px;width:1px;height:18px;background:#fff;"></div>
<div class="" style="left:885px;top:859px;width:1px;height:20px;background:#a0a0a0;"></div>
<div class="" style="left:886px;top:860px;width:1px;height:18px;background:#fff;"></div>
<div class="" style="left:925px;top:859px;width:1px;height:20px;background:#a0a0a0;"></div>
<div class="" style="left:926px;top:860px;width:1px;height:18px;background:#fff;"></div>
<div class="" style="left:965px;top:859px;width:1px;height:20px;background:#a0a0a0;"></div>
<div class="" style="left:966px;top:860px;width:1px;height:18px;background:#fff;"></div>
<div class="" style="left:1005px;top:859px;width:1px;height:20px;background:#a0a0a0;"></div>
<div class="" style="left:1006px;top:860px;width:1px;height:18px;background:#fff;"></div>
<div class="" style="left:1045px;top:859px;width:1px;height:20px;background:#a0a0a0;"></div>
<div class="" style="left:1046px;top:860px;width:1px;height:18px;background:#fff;"></div>
<div class="" style="left:1085px;top:859px;width:1px;height:20px;background:#a0a0a0;"></div>
<div class="" style="left:1086px;top:860px;width:1px;height:18px;background:#fff;"></div>
<div class="" style="left:1125px;top:859px;width:1px;height:20px;background:#a0a0a0;"></div>
<div class="" style="left:1126px;top:860px;width:1px;height:18px;background:#fff;"></div>
<div class="" style="left:1165px;top:859px;width:1px;height:20px;background:#a0a0a0;"></div>
<div class="" style="left:1166px;top:860px;width:1px;height:18px;background:#fff;"></div>
<div class="" style="left:1205px;top:859px;width:1px;height:20px;background:#a0a0a0;"></div>
<div class="" style="left:1206px;top:860px;width:1px;height:18px;background:#fff;"></div>
<div class="" style="left:1245px;top:859px;width:1px;height:20px;background:#a0a0a0;"></div>
<div class="" style="left:1246px;top:860px;width:1px;height:18px;background:#fff;"></div>
<div class="" style="left:1285px;top:859px;width:1px;height:20px;background:#a0a0a0;"></div>
<div class="" style="left:1286px;top:860px;width:1px;height:18px;background:#fff;"></div>
<div class="" style="left:1325px;top:859px;width:1px;height:20px;background:#a0a0a0;"></div>
<div class="" style="left:1326px;top:860px;width:1px;height:18px;background:#fff;"></div>
<div class="" style="left:1365px;top:859px;width:1px;height:20px;background:#a0a0a0;"></div>
<div class="" style="left:1366px;top:860px;width:1px;height:18px;background:#fff;"></div>
<div class="" style="left:1405px;top:859px;width:1px;height:20px;background:#a0a0a0;"></div>
<div class="" style="left:1406px;top:860px;width:1px;height:18px;background:#fff;"></div>
<div class="" style="left:1445px;top:859px;width:1px;height:20px;background:#a0a0a0;"></div>
<div class="" style="left:1446px;top:860px;width:1px;height:18px;background:#fff;"></div>
<div class="" style="left:1485px;top:859px;width:1px;height:20px;background:#a0a0a0;"></div>
<div class="" style="left:1486px;top:860px;width:1px;height:18px;background:#fff;"></div>
<div class="" style="left:1525px;top:859px;width:1px;height:20px;background:#a0a0a0;"></div>
<div class="" style="left:1526px;top:860px;width:1px;height:18px;background:#fff;"></div>
<div class="" style="left:1565px;top:859px;width:1px;height:20px;background:#a0a0a0;"></div>
<div class="" style="left:1566px;top:860px;width:1px;height:18px;background:#fff;"></div>
<div class="" style="left:1605px;top:859px;width:1px;height:20px;background:#a0a0a0;"></div>
<div class="" style="left:1606px;top:860px;width:1px;height:18px;background:#fff;"></div>
<div class="" style="left:1645px;top:859px;width:1px;height:20px;background:#a0a0a0;"></div>
<div class="" style="left:1646px;top:860px;width:1px;height:18px;background:#fff;"></div>
<div class="" style="left:1685px;top:859px;width:1px;height:20px;background:#a0a0a0;"></div>
<div class="" style="left:1686px;top:860px;width:1px;height:18px;background:#fff;"></div>
<div class="" style="left:1725px;top:859px;width:1px;height:20px;background:#a0a0a0;"></div>
<div class="" style="left:1726px;top:860px;width:1px;height:18px;background:#fff;"></div>
<div class="" style="left:1765px;top:859px;width:1px;height:20px;background:#a0a0a0;"></div>
<div class="" style="left:1766px;top:860px;width:1px;height:18px;background:#fff;"></div>
<div class="" style="left:1805px;top:859px;width:1px;height:20px;background:#a0a0a0;"></div>
<div class="" style="left:1806px;top:860px;width:1px;height:18px;background:#fff;"></div>
<div class="" style="left:1845px;top:859px;width:1px;height:20px;background:#a0a0a0;"></div>
<div class="" style="left:1846px;top:860px;width:1px;height:18px;background:#fff;"></div>
<div class="" style="left:1885px;top:859px;width:1px;height:20px;background:#a0a0a0;"></div>
<div class="" style="left:1886px;top:860px;width:1px;height:18px;background:#fff;"></div>
<div class="" style="left:1925px;top:859px;width:1px;height:20px;background:#a0a0a0;"></div>
<div class="" style="left:1926px;top:860px;width:1px;height:18px;background:#fff;"></div>
<div class="s12" style="left:86px;top:863px;width:40px;text-align:center;font-family:'Liberation Sans',sans-serif;font-size:12px;">A</div>
<div class="s12" style="left:126px;top:863px;width:40px;text-align:center;font-family:'Liberation Sans',sans-serif;font-size:12px;">B</div>
<div class="s12" style="left:166px;top:863px;width:40px;text-align:center;font-family:'Liberation Sans',sans-serif;font-size:12px;">C</div>
<div class="s12" style="left:206px;top:863px;width:40px;text-align:center;font-family:'Liberation Sans',sans-serif;font-size:12px;">D</div>
<div class="s12" style="left:246px;top:863px;width:40px;text-align:center;font-family:'Liberation Sans',sans-serif;font-size:12px;">E</div>
<div class="s12" style="left:286px;top:863px;width:40px;text-align:center;font-family:'Liberation Sans',sans-serif;font-size:12px;">F</div>
<div class="s12" style="left:326px;top:863px;width:40px;text-align:center;font-family:'Liberation Sans',sans-serif;font-size:12px;">G</div>
<div class="s12" style="left:366px;top:863px;width:40px;text-align:center;font-family:'Liberation Sans',sans-serif;font-size:12px;">H</div>
<div class="s12" style="left:406px;top:863px;width:40px;text-align:center;font-family:'Liberation Sans',sans-serif;font-size:12px;">I</div>
<div class="s12" style="left:446px;top:863px;width:40px;text-align:center;font-family:'Liberation Sans',sans-serif;font-size:12px;">J</div>
<div class="s12" style="left:486px;top:863px;width:40px;text-align:center;font-family:'Liberation Sans',sans-serif;font-size:12px;">K</div>
<div class="s12" style="left:526px;top:863px;width:40px;text-align:center;font-family:'Liberation Sans',sans-serif;font-size:12px;">L</div>
<div class="s12" style="left:566px;top:863px;width:40px;text-align:center;font-family:'Liberation Sans',sans-serif;font-size:12px;">M</div>
<div class="s12" style="left:606px;top:863px;width:40px;text-align:center;font-family:'Liberation Sans',sans-serif;font-size:12px;">N</div>
<div class="s12" style="left:646px;top:863px;width:40px;text-align:center;font-family:'Liberation Sans',sans-serif;font-size:12px;">O</div>
<div class="s12" style="left:686px;top:863px;width:40px;text-align:center;font-family:'Liberation Sans',sans-serif;font-size:12px;">P</div>
<div class="s12" style="left:726px;top:863px;width:40px;text-align:center;font-family:'Liberation Sans',sans-serif;font-size:12px;">Q</div>
<div class="s12" style="left:766px;top:863px;width:40px;text-align:center;font-family:'Liberation Sans',sans-serif;font-size:12px;">R</div>
<div class="s12" style="left:806px;top:863px;width:40px;text-align:center;font-family:'Liberation Sans',sans-serif;font-size:12px;">S</div>
<div class="s12" style="left:846px;top:863px;width:40px;text-align:center;font-family:'Liberation Sans',sans-serif;font-size:12px;">T</div>
<div class="s12" style="left:886px;top:863px;width:40px;text-align:center;font-family:'Liberation Sans',sans-serif;font-size:12px;">U</div>
<div class="s12" style="left:926px;top:863px;width:40px;text-align:center;font-family:'Liberation Sans',sans-serif;font-size:12px;">V</div>
<div class="s12" style="left:966px;top:863px;width:40px;text-align:center;font-family:'Liberation Sans',sans-serif;font-size:12px;">W</div>
<div class="s12" style="left:1006px;top:863px;width:40px;text-align:center;font-family:'Liberation Sans',sans-serif;font-size:12px;">X</div>
<div class="s12" style="left:1046px;top:863px;width:40px;text-align:center;font-family:'Liberation Sans',sans-serif;font-size:12px;">Y</div>
<div class="s12" style="left:1086px;top:863px;width:40px;text-align:center;font-family:'Liberation Sans',sans-serif;font-size:12px;">Z</div>
<div class="s12" style="left:1126px;top:863px;width:40px;text-align:center;font-family:'Liberation Sans',sans-serif;font-size:12px;">AA</div>
<div class="s12" style="left:1166px;top:863px;width:40px;text-align:center;font-family:'Liberation Sans',sans-serif;font-size:12px;">AB</div>
<div class="s12" style="left:1206px;top:863px;width:40px;text-align:center;font-family:'Liberation Sans',sans-serif;font-size:12px;">AC</div>
<div class="s12" style="left:1246px;top:863px;width:40px;text-align:center;font-family:'Liberation Sans',sans-serif;font-size:12px;">AD</div>
<div class="s12" style="left:1286px;top:863px;width:40px;text-align:center;font-family:'Liberation Sans',sans-serif;font-size:12px;">AE</div>
<div class="s12" style="left:1326px;top:863px;width:40px;text-align:center;font-family:'Liberation Sans',sans-serif;font-size:12px;">AF</div>
<div class="s12" style="left:1366px;top:863px;width:40px;text-align:center;font-family:'Liberation Sans',sans-serif;font-size:12px;">AG</div>
<div class="s12" style="left:1406px;top:863px;width:40px;text-align:center;font-family:'Liberation Sans',sans-serif;font-size:12px;">AH</div>
<div class="s12" style="left:1446px;top:863px;width:40px;text-align:center;font-family:'Liberation Sans',sans-serif;font-size:12px;">AI</div>
<div class="s12" style="left:1486px;top:863px;width:40px;text-align:center;font-family:'Liberation Sans',sans-serif;font-size:12px;">AJ</div>
<div class="s12" style="left:1526px;top:863px;width:40px;text-align:center;font-family:'Liberation Sans',sans-serif;font-size:12px;">AK</div>
<div class="s12" style="left:1566px;top:863px;width:40px;text-align:center;font-family:'Liberation Sans',sans-serif;font-size:12px;">AL</div>
<div class="s12" style="left:1606px;top:863px;width:40px;text-align:center;font-family:'Liberation Sans',sans-serif;font-size:12px;">AM</div>
<div class="s12" style="left:1646px;top:863px;width:40px;text-align:center;font-family:'Liberation Sans',sans-serif;font-size:12px;">AN</div>
<div class="s12" style="left:1686px;top:863px;width:40px;text-align:center;font-family:'Liberation Sans',sans-serif;font-size:12px;">AO</div>
<div class="s12" style="left:1726px;top:863px;width:40px;text-align:center;font-family:'Liberation Sans',sans-serif;font-size:12px;">AP</div>
<div class="s12" style="left:1766px;top:863px;width:40px;text-align:center;font-family:'Liberation Sans',sans-serif;font-size:12px;">AQ</div>
<div class="s12" style="left:1806px;top:863px;width:40px;text-align:center;font-family:'Liberation Sans',sans-serif;font-size:12px;">AR</div>
<div class="s12" style="left:1846px;top:863px;width:40px;text-align:center;font-family:'Liberation Sans',sans-serif;font-size:12px;">AS</div>
<div class="s12" style="left:1886px;top:863px;width:40px;text-align:center;font-family:'Liberation Sans',sans-serif;font-size:12px;">AT</div>
<div class="" style="left:85px;top:899px;width:1817px;height:1px;background:#ececec;"></div>
<div class="" style="left:85px;top:919px;width:1817px;height:1px;background:#ececec;"></div>
<div class="" style="left:85px;top:939px;width:1817px;height:1px;background:#ececec;"></div>
<div class="" style="left:85px;top:959px;width:1817px;height:1px;background:#ececec;"></div>
<div class="" style="left:85px;top:979px;width:1817px;height:1px;background:#ececec;"></div>
<div class="" style="left:85px;top:999px;width:1817px;height:1px;background:#ececec;"></div>
<div class="" style="left:85px;top:1019px;width:1817px;height:1px;background:#ececec;"></div>
<div class="" style="left:85px;top:1039px;width:1817px;height:1px;background:#ececec;"></div>
<div class="" style="left:85px;top:1059px;width:1817px;height:1px;background:#ececec;"></div>
<div class="" style="left:125px;top:879px;width:1px;height:163px;background:#ececec;"></div>
<div class="" style="left:165px;top:879px;width:1px;height:163px;background:#ececec;"></div>
<div class="" style="left:205px;top:879px;width:1px;height:163px;background:#ececec;"></div>
<div class="" style="left:245px;top:879px;width:1px;height:163px;background:#ececec;"></div>
<div class="" style="left:285px;top:879px;width:1px;height:163px;background:#ececec;"></div>
<div class="" style="left:325px;top:879px;width:1px;height:163px;background:#ececec;"></div>
<div class="" style="left:365px;top:879px;width:1px;height:163px;background:#ececec;"></div>
<div class="" style="left:405px;top:879px;width:1px;height:163px;background:#ececec;"></div>
<div class="" style="left:445px;top:879px;width:1px;height:163px;background:#ececec;"></div>
<div class="" style="left:485px;top:879px;width:1px;height:163px;background:#ececec;"></div>
<div class="" style="left:525px;top:879px;width:1px;height:163px;background:#ececec;"></div>
<div class="" style="left:565px;top:879px;width:1px;height:163px;background:#ececec;"></div>
<div class="" style="left:605px;top:879px;width:1px;height:163px;background:#ececec;"></div>
<div class="" style="left:645px;top:879px;width:1px;height:163px;background:#ececec;"></div>
<div class="" style="left:685px;top:879px;width:1px;height:163px;background:#ececec;"></div>
<div class="" style="left:725px;top:879px;width:1px;height:163px;background:#ececec;"></div>
<div class="" style="left:765px;top:879px;width:1px;height:163px;background:#ececec;"></div>
<div class="" style="left:805px;top:879px;width:1px;height:163px;background:#ececec;"></div>
<div class="" style="left:845px;top:879px;width:1px;height:163px;background:#ececec;"></div>
<div class="" style="left:885px;top:879px;width:1px;height:163px;background:#ececec;"></div>
<div class="" style="left:925px;top:879px;width:1px;height:163px;background:#ececec;"></div>
<div class="" style="left:965px;top:879px;width:1px;height:163px;background:#ececec;"></div>
<div class="" style="left:1005px;top:879px;width:1px;height:163px;background:#ececec;"></div>
<div class="" style="left:1045px;top:879px;width:1px;height:163px;background:#ececec;"></div>
<div class="" style="left:1085px;top:879px;width:1px;height:163px;background:#ececec;"></div>
<div class="" style="left:1125px;top:879px;width:1px;height:163px;background:#ececec;"></div>
<div class="" style="left:1165px;top:879px;width:1px;height:163px;background:#ececec;"></div>
<div class="" style="left:1205px;top:879px;width:1px;height:163px;background:#ececec;"></div>
<div class="" style="left:1245px;top:879px;width:1px;height:163px;background:#ececec;"></div>
<div class="" style="left:1285px;top:879px;width:1px;height:163px;background:#ececec;"></div>
<div class="" style="left:1325px;top:879px;width:1px;height:163px;background:#ececec;"></div>
<div class="" style="left:1365px;top:879px;width:1px;height:163px;background:#ececec;"></div>
<div class="" style="left:1405px;top:879px;width:1px;height:163px;background:#ececec;"></div>
<div class="" style="left:1445px;top:879px;width:1px;height:163px;background:#ececec;"></div>
<div class="" style="left:1485px;top:879px;width:1px;height:163px;background:#ececec;"></div>
<div class="" style="left:1525px;top:879px;width:1px;height:163px;background:#ececec;"></div>
<div class="" style="left:1565px;top:879px;width:1px;height:163px;background:#ececec;"></div>
<div class="" style="left:1605px;top:879px;width:1px;height:163px;background:#ececec;"></div>
<div class="" style="left:1645px;top:879px;width:1px;height:163px;background:#ececec;"></div>
<div class="" style="left:1685px;top:879px;width:1px;height:163px;background:#ececec;"></div>
<div class="" style="left:1725px;top:879px;width:1px;height:163px;background:#ececec;"></div>
<div class="" style="left:1765px;top:879px;width:1px;height:163px;background:#ececec;"></div>
<div class="" style="left:1805px;top:879px;width:1px;height:163px;background:#ececec;"></div>
<div class="" style="left:1845px;top:879px;width:1px;height:163px;background:#ececec;"></div>
<div class="" style="left:1885px;top:879px;width:1px;height:163px;background:#ececec;"></div>
<div class="" style="left:1925px;top:879px;width:1px;height:163px;background:#ececec;"></div>
<div class="" style="left:1px;top:879px;width:84px;height:20px;background:#f0f0f0;"></div>
<div class="" style="left:1px;top:879px;width:84px;height:1px;background:#a0a0a0;"></div>
<div class="" style="left:1px;top:880px;width:84px;height:1px;background:#fff;"></div>
<div class="" style="left:1px;top:880px;width:1px;height:19px;background:#fff;"></div>
<div class="" style="left:84px;top:879px;width:1px;height:20px;background:#a0a0a0;"></div>
<div class="" style="left:1px;top:898px;width:84px;height:2px;background:#101010;"></div>
<div class="s12" style="left:1px;top:886px;width:84px;text-align:center;font-family:'Liberation Sans',sans-serif;font-size:12px;">1</div>
<div class="" style="left:1px;top:899px;width:84px;height:20px;background:#f0f0f0;"></div>
<div class="" style="left:1px;top:899px;width:84px;height:1px;background:#a0a0a0;"></div>
<div class="" style="left:1px;top:900px;width:84px;height:1px;background:#fff;"></div>
<div class="" style="left:1px;top:900px;width:1px;height:19px;background:#fff;"></div>
<div class="" style="left:84px;top:899px;width:1px;height:20px;background:#a0a0a0;"></div>
<div class="" style="left:1px;top:918px;width:84px;height:2px;background:#101010;"></div>
<div class="s12" style="left:1px;top:906px;width:84px;text-align:center;font-family:'Liberation Sans',sans-serif;font-size:12px;">2</div>
<div class="" style="left:1px;top:919px;width:84px;height:20px;background:#f0f0f0;"></div>
<div class="" style="left:1px;top:919px;width:84px;height:1px;background:#a0a0a0;"></div>
<div class="" style="left:1px;top:920px;width:84px;height:1px;background:#fff;"></div>
<div class="" style="left:1px;top:920px;width:1px;height:19px;background:#fff;"></div>
<div class="" style="left:84px;top:919px;width:1px;height:20px;background:#a0a0a0;"></div>
<div class="" style="left:1px;top:938px;width:84px;height:2px;background:#101010;"></div>
<div class="s12" style="left:1px;top:926px;width:84px;text-align:center;font-family:'Liberation Sans',sans-serif;font-size:12px;">3</div>
<div class="" style="left:1px;top:939px;width:84px;height:20px;background:#f0f0f0;"></div>
<div class="" style="left:1px;top:939px;width:84px;height:1px;background:#a0a0a0;"></div>
<div class="" style="left:1px;top:940px;width:84px;height:1px;background:#fff;"></div>
<div class="" style="left:1px;top:940px;width:1px;height:19px;background:#fff;"></div>
<div class="" style="left:84px;top:939px;width:1px;height:20px;background:#a0a0a0;"></div>
<div class="" style="left:1px;top:958px;width:84px;height:2px;background:#101010;"></div>
<div class="s12" style="left:1px;top:946px;width:84px;text-align:center;font-family:'Liberation Sans',sans-serif;font-size:12px;">4</div>
<div class="" style="left:1px;top:959px;width:84px;height:20px;background:#f0f0f0;"></div>
<div class="" style="left:1px;top:959px;width:84px;height:1px;background:#a0a0a0;"></div>
<div class="" style="left:1px;top:960px;width:84px;height:1px;background:#fff;"></div>
<div class="" style="left:1px;top:960px;width:1px;height:19px;background:#fff;"></div>
<div class="" style="left:84px;top:959px;width:1px;height:20px;background:#a0a0a0;"></div>
<div class="" style="left:1px;top:978px;width:84px;height:2px;background:#101010;"></div>
<div class="s12" style="left:1px;top:966px;width:84px;text-align:center;font-family:'Liberation Sans',sans-serif;font-size:12px;">5</div>
<div class="" style="left:1px;top:979px;width:84px;height:20px;background:#f0f0f0;"></div>
<div class="" style="left:1px;top:979px;width:84px;height:1px;background:#a0a0a0;"></div>
<div class="" style="left:1px;top:980px;width:84px;height:1px;background:#fff;"></div>
<div class="" style="left:1px;top:980px;width:1px;height:19px;background:#fff;"></div>
<div class="" style="left:84px;top:979px;width:1px;height:20px;background:#a0a0a0;"></div>
<div class="s12" style="left:1px;top:986px;width:84px;text-align:center;font-family:'Liberation Sans',sans-serif;font-size:12px;">6</div>
<div class="" style="left:1px;top:999px;width:84px;height:20px;background:#f0f0f0;"></div>
<div class="" style="left:1px;top:999px;width:84px;height:1px;background:#a0a0a0;"></div>
<div class="" style="left:1px;top:1000px;width:84px;height:1px;background:#fff;"></div>
<div class="" style="left:1px;top:1000px;width:1px;height:19px;background:#fff;"></div>
<div class="" style="left:84px;top:999px;width:1px;height:20px;background:#a0a0a0;"></div>
<div class="s12" style="left:1px;top:1006px;width:84px;text-align:center;font-family:'Liberation Sans',sans-serif;font-size:12px;">7</div>
<div class="" style="left:1px;top:1019px;width:84px;height:20px;background:#f0f0f0;"></div>
<div class="" style="left:1px;top:1019px;width:84px;height:1px;background:#a0a0a0;"></div>
<div class="" style="left:1px;top:1020px;width:84px;height:1px;background:#fff;"></div>
<div class="" style="left:1px;top:1020px;width:1px;height:19px;background:#fff;"></div>
<div class="" style="left:84px;top:1019px;width:1px;height:20px;background:#a0a0a0;"></div>
<div class="s12" style="left:1px;top:1026px;width:84px;text-align:center;font-family:'Liberation Sans',sans-serif;font-size:12px;">8</div>
<div class="" style="left:1px;top:1039px;width:84px;height:20px;background:#f0f0f0;"></div>
<div class="" style="left:1px;top:1039px;width:84px;height:1px;background:#a0a0a0;"></div>
<div class="" style="left:1px;top:1040px;width:84px;height:1px;background:#fff;"></div>
<div class="" style="left:1px;top:1040px;width:1px;height:19px;background:#fff;"></div>
<div class="" style="left:84px;top:1039px;width:1px;height:20px;background:#a0a0a0;"></div>
<div class="s12" style="left:1px;top:1046px;width:84px;text-align:center;font-family:'Liberation Sans',sans-serif;font-size:12px;">9</div>
<div class="" style="left:85px;top:879px;width:641px;height:101px;background:#a6cef0;"></div>
<div class="" style="left:88px;top:882px;width:37px;height:17px;background:#fff;"></div>
<div class="" style="left:85px;top:899px;width:641px;height:1px;background:#0a2e50;"></div>
<div class="" style="left:85px;top:919px;width:641px;height:1px;background:#0a2e50;"></div>
<div class="" style="left:85px;top:939px;width:641px;height:1px;background:#0a2e50;"></div>
<div class="" style="left:85px;top:959px;width:641px;height:1px;background:#0a2e50;"></div>
<div class="" style="left:125px;top:879px;width:1px;height:21px;background:#0a2e50;"></div>
<div class="" style="left:205px;top:879px;width:1px;height:21px;background:#0a2e50;"></div>
<div class="" style="left:285px;top:879px;width:1px;height:21px;background:#0a2e50;"></div>
<div class="" style="left:365px;top:879px;width:1px;height:21px;background:#0a2e50;"></div>
<div class="" style="left:445px;top:879px;width:1px;height:21px;background:#0a2e50;"></div>
<div class="" style="left:605px;top:879px;width:1px;height:21px;background:#0a2e50;"></div>
<div class="" style="left:645px;top:879px;width:1px;height:21px;background:#0a2e50;"></div>
<div class="" style="left:685px;top:879px;width:1px;height:21px;background:#0a2e50;"></div>
<div class="" style="left:125px;top:899px;width:1px;height:21px;background:#0a2e50;"></div>
<div class="" style="left:165px;top:899px;width:1px;height:21px;background:#0a2e50;"></div>
<div class="" style="left:205px;top:899px;width:1px;height:21px;background:#0a2e50;"></div>
<div class="" style="left:245px;top:899px;width:1px;height:21px;background:#0a2e50;"></div>
<div class="" style="left:285px;top:899px;width:1px;height:21px;background:#0a2e50;"></div>
<div class="" style="left:325px;top:899px;width:1px;height:21px;background:#0a2e50;"></div>
<div class="" style="left:365px;top:899px;width:1px;height:21px;background:#0a2e50;"></div>
<div class="" style="left:405px;top:899px;width:1px;height:21px;background:#0a2e50;"></div>
<div class="" style="left:445px;top:899px;width:1px;height:21px;background:#0a2e50;"></div>
<div class="" style="left:485px;top:899px;width:1px;height:21px;background:#0a2e50;"></div>
<div class="" style="left:525px;top:899px;width:1px;height:21px;background:#0a2e50;"></div>
<div class="" style="left:565px;top:899px;width:1px;height:21px;background:#0a2e50;"></div>
<div class="" style="left:605px;top:899px;width:1px;height:21px;background:#0a2e50;"></div>
<div class="" style="left:645px;top:899px;width:1px;height:21px;background:#0a2e50;"></div>
<div class="" style="left:685px;top:899px;width:1px;height:21px;background:#0a2e50;"></div>
<div class="" style="left:125px;top:919px;width:1px;height:21px;background:#0a2e50;"></div>
<div class="" style="left:165px;top:919px;width:1px;height:21px;background:#0a2e50;"></div>
<div class="" style="left:205px;top:919px;width:1px;height:21px;background:#0a2e50;"></div>
<div class="" style="left:245px;top:919px;width:1px;height:21px;background:#0a2e50;"></div>
<div class="" style="left:285px;top:919px;width:1px;height:21px;background:#0a2e50;"></div>
<div class="" style="left:325px;top:919px;width:1px;height:21px;background:#0a2e50;"></div>
<div class="" style="left:365px;top:919px;width:1px;height:21px;background:#0a2e50;"></div>
<div class="" style="left:405px;top:919px;width:1px;height:21px;background:#0a2e50;"></div>
<div class="" style="left:445px;top:919px;width:1px;height:21px;background:#0a2e50;"></div>
<div class="" style="left:485px;top:919px;width:1px;height:21px;background:#0a2e50;"></div>
<div class="" style="left:525px;top:919px;width:1px;height:21px;background:#0a2e50;"></div>
<div class="" style="left:565px;top:919px;width:1px;height:21px;background:#0a2e50;"></div>
<div class="" style="left:605px;top:919px;width:1px;height:21px;background:#0a2e50;"></div>
<div class="" style="left:645px;top:919px;width:1px;height:21px;background:#0a2e50;"></div>
<div class="" style="left:685px;top:919px;width:1px;height:21px;background:#0a2e50;"></div>
<div class="" style="left:125px;top:939px;width:1px;height:21px;background:#0a2e50;"></div>
<div class="" style="left:165px;top:939px;width:1px;height:21px;background:#0a2e50;"></div>
<div class="" style="left:205px;top:939px;width:1px;height:21px;background:#0a2e50;"></div>
<div class="" style="left:245px;top:939px;width:1px;height:21px;background:#0a2e50;"></div>
<div class="" style="left:285px;top:939px;width:1px;height:21px;background:#0a2e50;"></div>
<div class="" style="left:325px;top:939px;width:1px;height:21px;background:#0a2e50;"></div>
<div class="" style="left:365px;top:939px;width:1px;height:21px;background:#0a2e50;"></div>
<div class="" style="left:405px;top:939px;width:1px;height:21px;background:#0a2e50;"></div>
<div class="" style="left:445px;top:939px;width:1px;height:21px;background:#0a2e50;"></div>
<div class="" style="left:485px;top:939px;width:1px;height:21px;background:#0a2e50;"></div>
<div class="" style="left:525px;top:939px;width:1px;height:21px;background:#0a2e50;"></div>
<div class="" style="left:565px;top:939px;width:1px;height:21px;background:#0a2e50;"></div>
<div class="" style="left:605px;top:939px;width:1px;height:21px;background:#0a2e50;"></div>
<div class="" style="left:645px;top:939px;width:1px;height:21px;background:#0a2e50;"></div>
<div class="" style="left:685px;top:939px;width:1px;height:21px;background:#0a2e50;"></div>
<div class="" style="left:125px;top:959px;width:1px;height:21px;background:#0a2e50;"></div>
<div class="" style="left:205px;top:959px;width:1px;height:21px;background:#0a2e50;"></div>
<div class="" style="left:285px;top:959px;width:1px;height:21px;background:#0a2e50;"></div>
<div class="" style="left:365px;top:959px;width:1px;height:21px;background:#0a2e50;"></div>
<div class="" style="left:445px;top:959px;width:1px;height:21px;background:#0a2e50;"></div>
<div class="" style="left:485px;top:959px;width:1px;height:21px;background:#0a2e50;"></div>
<div class="" style="left:525px;top:959px;width:1px;height:21px;background:#0a2e50;"></div>
<div class="" style="left:565px;top:959px;width:1px;height:21px;background:#0a2e50;"></div>
<div class="" style="left:605px;top:959px;width:1px;height:21px;background:#0a2e50;"></div>
<div class="" style="left:645px;top:959px;width:1px;height:21px;background:#0a2e50;"></div>
<div class="" style="left:685px;top:959px;width:1px;height:21px;background:#0a2e50;"></div>
<div style="left:153.0px;top:885px;font-family:'Liberation Mono',monospace;font-size:12px;line-height:12px;color:#000;transform:scaleX(0.8333);transform-origin:0 0;">20GP</div>
<div style="left:233.0px;top:885px;font-family:'Liberation Mono',monospace;font-size:12px;line-height:12px;color:#000;transform:scaleX(0.8333);transform-origin:0 0;">40GP</div>
<div style="left:313.0px;top:885px;font-family:'Liberation Mono',monospace;font-size:12px;line-height:12px;color:#000;transform:scaleX(0.8333);transform-origin:0 0;">40HC</div>
<div style="left:393.0px;top:885px;font-family:'Liberation Mono',monospace;font-size:12px;line-height:12px;color:#000;transform:scaleX(0.8333);transform-origin:0 0;">45HC</div>
<div class="t12" style="left:512px;top:884px;">合计</div>
<div style="left:139.0px;top:905px;font-family:'Liberation Mono',monospace;font-size:12px;line-height:12px;color:#000;transform:scaleX(0.8333);transform-origin:0 0;">AV</div>
<div style="left:179.0px;top:905px;font-family:'Liberation Mono',monospace;font-size:12px;line-height:12px;color:#000;transform:scaleX(0.8333);transform-origin:0 0;">DM</div>
<div style="left:219.0px;top:905px;font-family:'Liberation Mono',monospace;font-size:12px;line-height:12px;color:#000;transform:scaleX(0.8333);transform-origin:0 0;">AV</div>
<div style="left:259.0px;top:905px;font-family:'Liberation Mono',monospace;font-size:12px;line-height:12px;color:#000;transform:scaleX(0.8333);transform-origin:0 0;">DM</div>
<div style="left:299.0px;top:905px;font-family:'Liberation Mono',monospace;font-size:12px;line-height:12px;color:#000;transform:scaleX(0.8333);transform-origin:0 0;">AV</div>
<div style="left:339.0px;top:905px;font-family:'Liberation Mono',monospace;font-size:12px;line-height:12px;color:#000;transform:scaleX(0.8333);transform-origin:0 0;">DM</div>
<div style="left:379.0px;top:905px;font-family:'Liberation Mono',monospace;font-size:12px;line-height:12px;color:#000;transform:scaleX(0.8333);transform-origin:0 0;">AV</div>
<div style="left:419.0px;top:905px;font-family:'Liberation Mono',monospace;font-size:12px;line-height:12px;color:#000;transform:scaleX(0.8333);transform-origin:0 0;">DM</div>
<div style="left:459.0px;top:905px;font-family:'Liberation Mono',monospace;font-size:12px;line-height:12px;color:#000;transform:scaleX(0.8333);transform-origin:0 0;">AV</div>
<div style="left:499.0px;top:905px;font-family:'Liberation Mono',monospace;font-size:12px;line-height:12px;color:#000;transform:scaleX(0.8333);transform-origin:0 0;">DM</div>
<div style="left:530.0px;top:905px;font-family:'Liberation Mono',monospace;font-size:12px;line-height:12px;color:#000;transform:scaleX(0.8333);transform-origin:0 0;">TOTAL</div>
<div style="left:576.0px;top:905px;font-family:'Liberation Mono',monospace;font-size:12px;line-height:12px;color:#000;transform:scaleX(0.8333);transform-origin:0 0;">TEU</div>
<div style="left:619.0px;top:905px;font-family:'Liberation Mono',monospace;font-size:12px;line-height:12px;color:#000;transform:scaleX(0.8333);transform-origin:0 0;">20</div>
<div style="left:659.0px;top:905px;font-family:'Liberation Mono',monospace;font-size:12px;line-height:12px;color:#000;transform:scaleX(0.8333);transform-origin:0 0;">40</div>
<div style="left:699.0px;top:905px;font-family:'Liberation Mono',monospace;font-size:12px;line-height:12px;color:#000;transform:scaleX(0.8333);transform-origin:0 0;">45</div>
<div style="left:90.0px;top:925px;font-family:'Liberation Mono',monospace;font-size:12px;line-height:12px;color:#000;transform:scaleX(0.8333);transform-origin:0 0;">COSCO</div>
<div style="left:133.0px;top:925px;font-family:'Liberation Mono',monospace;font-size:12px;line-height:12px;color:#000;transform:scaleX(0.8333);transform-origin:0 0;">1528</div>
<div style="left:173.0px;top:925px;font-family:'Liberation Mono',monospace;font-size:12px;line-height:12px;color:#000;transform:scaleX(0.8333);transform-origin:0 0;">1567</div>
<div style="left:219.0px;top:925px;font-family:'Liberation Mono',monospace;font-size:12px;line-height:12px;color:#000;transform:scaleX(0.8333);transform-origin:0 0;">73</div>
<div style="left:259.0px;top:925px;font-family:'Liberation Mono',monospace;font-size:12px;line-height:12px;color:#000;transform:scaleX(0.8333);transform-origin:0 0;">44</div>
<div style="left:296.0px;top:925px;font-family:'Liberation Mono',monospace;font-size:12px;line-height:12px;color:#000;transform:scaleX(0.8333);transform-origin:0 0;">808</div>
<div style="left:336.0px;top:925px;font-family:'Liberation Mono',monospace;font-size:12px;line-height:12px;color:#000;transform:scaleX(0.8333);transform-origin:0 0;">409</div>
<div style="left:382.0px;top:925px;font-family:'Liberation Mono',monospace;font-size:12px;line-height:12px;color:#000;transform:scaleX(0.8333);transform-origin:0 0;">8</div>
<div style="left:422.0px;top:925px;font-family:'Liberation Mono',monospace;font-size:12px;line-height:12px;color:#000;transform:scaleX(0.8333);transform-origin:0 0;">2</div>
<div style="left:453.0px;top:925px;font-family:'Liberation Mono',monospace;font-size:12px;line-height:12px;color:#000;transform:scaleX(0.8333);transform-origin:0 0;">2417</div>
<div style="left:493.0px;top:925px;font-family:'Liberation Mono',monospace;font-size:12px;line-height:12px;color:#000;transform:scaleX(0.8333);transform-origin:0 0;">2022</div>
<div style="left:533.0px;top:925px;font-family:'Liberation Mono',monospace;font-size:12px;line-height:12px;color:#000;transform:scaleX(0.8333);transform-origin:0 0;">4439</div>
<div style="left:573.0px;top:925px;font-family:'Liberation Mono',monospace;font-size:12px;line-height:12px;color:#000;transform:scaleX(0.8333);transform-origin:0 0;">5783</div>
<div style="left:613.0px;top:925px;font-family:'Liberation Mono',monospace;font-size:12px;line-height:12px;color:#000;transform:scaleX(0.8333);transform-origin:0 0;">3095</div>
<div style="left:653.0px;top:925px;font-family:'Liberation Mono',monospace;font-size:12px;line-height:12px;color:#000;transform:scaleX(0.8333);transform-origin:0 0;">1334</div>
<div style="left:699.0px;top:925px;font-family:'Liberation Mono',monospace;font-size:12px;line-height:12px;color:#000;transform:scaleX(0.8333);transform-origin:0 0;">10</div>
<div class="t12" style="left:92px;top:944px;">合计</div>
<div style="left:133.0px;top:945px;font-family:'Liberation Mono',monospace;font-size:12px;line-height:12px;color:#000;transform:scaleX(0.8333);transform-origin:0 0;">1528</div>
<div style="left:173.0px;top:945px;font-family:'Liberation Mono',monospace;font-size:12px;line-height:12px;color:#000;transform:scaleX(0.8333);transform-origin:0 0;">1567</div>
<div style="left:219.0px;top:945px;font-family:'Liberation Mono',monospace;font-size:12px;line-height:12px;color:#000;transform:scaleX(0.8333);transform-origin:0 0;">73</div>
<div style="left:259.0px;top:945px;font-family:'Liberation Mono',monospace;font-size:12px;line-height:12px;color:#000;transform:scaleX(0.8333);transform-origin:0 0;">44</div>
<div style="left:296.0px;top:945px;font-family:'Liberation Mono',monospace;font-size:12px;line-height:12px;color:#000;transform:scaleX(0.8333);transform-origin:0 0;">808</div>
<div style="left:336.0px;top:945px;font-family:'Liberation Mono',monospace;font-size:12px;line-height:12px;color:#000;transform:scaleX(0.8333);transform-origin:0 0;">409</div>
<div style="left:382.0px;top:945px;font-family:'Liberation Mono',monospace;font-size:12px;line-height:12px;color:#000;transform:scaleX(0.8333);transform-origin:0 0;">8</div>
<div style="left:422.0px;top:945px;font-family:'Liberation Mono',monospace;font-size:12px;line-height:12px;color:#000;transform:scaleX(0.8333);transform-origin:0 0;">2</div>
<div style="left:453.0px;top:945px;font-family:'Liberation Mono',monospace;font-size:12px;line-height:12px;color:#000;transform:scaleX(0.8333);transform-origin:0 0;">2417</div>
<div style="left:493.0px;top:945px;font-family:'Liberation Mono',monospace;font-size:12px;line-height:12px;color:#000;transform:scaleX(0.8333);transform-origin:0 0;">2022</div>
<div style="left:533.0px;top:945px;font-family:'Liberation Mono',monospace;font-size:12px;line-height:12px;color:#000;transform:scaleX(0.8333);transform-origin:0 0;">4439</div>
<div style="left:573.0px;top:945px;font-family:'Liberation Mono',monospace;font-size:12px;line-height:12px;color:#000;transform:scaleX(0.8333);transform-origin:0 0;">5783</div>
<div style="left:613.0px;top:945px;font-family:'Liberation Mono',monospace;font-size:12px;line-height:12px;color:#000;transform:scaleX(0.8333);transform-origin:0 0;">3095</div>
<div style="left:653.0px;top:945px;font-family:'Liberation Mono',monospace;font-size:12px;line-height:12px;color:#000;transform:scaleX(0.8333);transform-origin:0 0;">1334</div>
<div style="left:699.0px;top:945px;font-family:'Liberation Mono',monospace;font-size:12px;line-height:12px;color:#000;transform:scaleX(0.8333);transform-origin:0 0;">10</div>
<div class="t12" style="left:88px;top:963px;width:37px;height:14px;overflow:hidden;"><div style="left:-6px;top:0">箱型合计</div></div>
<div style="left:153.0px;top:965px;font-family:'Liberation Mono',monospace;font-size:12px;line-height:12px;color:#000;transform:scaleX(0.8333);transform-origin:0 0;">3095</div>
<div style="left:236.0px;top:965px;font-family:'Liberation Mono',monospace;font-size:12px;line-height:12px;color:#000;transform:scaleX(0.8333);transform-origin:0 0;">117</div>
<div style="left:313.0px;top:965px;font-family:'Liberation Mono',monospace;font-size:12px;line-height:12px;color:#000;transform:scaleX(0.8333);transform-origin:0 0;">1217</div>
<div style="left:399.0px;top:965px;font-family:'Liberation Mono',monospace;font-size:12px;line-height:12px;color:#000;transform:scaleX(0.8333);transform-origin:0 0;">10</div>
<div class="" style="left:85px;top:879px;width:642px;height:3px;background:#000;"></div>
<div class="" style="left:85px;top:977px;width:642px;height:4px;background:#000;"></div>
<div class="" style="left:85px;top:879px;width:3px;height:102px;background:#000;"></div>
<div class="" style="left:723px;top:879px;width:4px;height:102px;background:#000;"></div>
<div class="" style="left:1902px;top:859px;width:18px;height:183px;background:#f8f8f8;"></div>
<div class="" style="left:1902px;top:860px;width:18px;height:16px;background:#f0f0f0;border-top:1px solid #fff;border-left:1px solid #fff;border-right:1px solid #696969;border-bottom:1px solid #696969;box-shadow:inset -1px -1px 0 #a0a0a0;"></div>
<svg style="position:absolute;left:1907px;top:866px" width="8" height="5"><path d="M0 4H8L4 0Z" fill="#000"/></svg>
<div class="" style="left:1902px;top:876px;width:18px;height:129px;background:#f0f0f0;border-top:1px solid #fff;border-left:1px solid #fff;border-right:1px solid #696969;border-bottom:1px solid #696969;box-shadow:inset -1px -1px 0 #a0a0a0;"></div>
<div class="" style="left:1902px;top:1025px;width:18px;height:16px;background:#f0f0f0;border-top:1px solid #fff;border-left:1px solid #fff;border-right:1px solid #696969;border-bottom:1px solid #696969;box-shadow:inset -1px -1px 0 #a0a0a0;"></div>
<svg style="position:absolute;left:1907px;top:1031px" width="8" height="5"><path d="M0 0H8L4 4Z" fill="#000"/></svg>
<div class="" style="left:1px;top:1042px;width:1901px;height:16px;background:#f8f8f8;"></div>
<div class="" style="left:1px;top:1042px;width:16px;height:16px;background:#f0f0f0;border-top:1px solid #fff;border-left:1px solid #fff;border-right:1px solid #696969;border-bottom:1px solid #696969;box-shadow:inset -1px -1px 0 #a0a0a0;"></div>
<svg style="position:absolute;left:6px;top:1046px" width="5" height="8"><path d="M4 0V8L0 4Z" fill="#000"/></svg>
<div class="" style="left:17px;top:1042px;width:1827px;height:16px;background:#f0f0f0;border-top:1px solid #fff;border-left:1px solid #fff;border-right:1px solid #696969;border-bottom:1px solid #696969;box-shadow:inset -1px -1px 0 #a0a0a0;"></div>
<div class="" style="left:1886px;top:1042px;width:16px;height:16px;background:#f0f0f0;border-top:1px solid #fff;border-left:1px solid #fff;border-right:1px solid #696969;border-bottom:1px solid #696969;box-shadow:inset -1px -1px 0 #a0a0a0;"></div>
<svg style="position:absolute;left:1892px;top:1046px" width="5" height="8"><path d="M0 0V8L4 4Z" fill="#000"/></svg>
<div class="" style="left:1902px;top:1042px;width:18px;height:16px;background:#f0f0f0;"></div>
<div class="" style="left:0px;top:1058px;width:1920px;height:1px;background:#a0a0a0;"></div>
<div class="" style="left:0px;top:1059px;width:1920px;height:21px;background:#f0f0f0;"></div>
<div class="" style="left:0px;top:1060px;width:99px;height:20px;border-top:1px solid #a0a0a0;border-left:1px solid #a0a0a0;"></div>
<div class="" style="left:102px;top:1060px;width:197px;height:20px;border-top:1px solid #a0a0a0;border-left:1px solid #a0a0a0;"></div>
<div class="" style="left:302px;top:1060px;width:1618px;height:20px;border-top:1px solid #a0a0a0;border-left:1px solid #a0a0a0;"></div>
</body></html>
